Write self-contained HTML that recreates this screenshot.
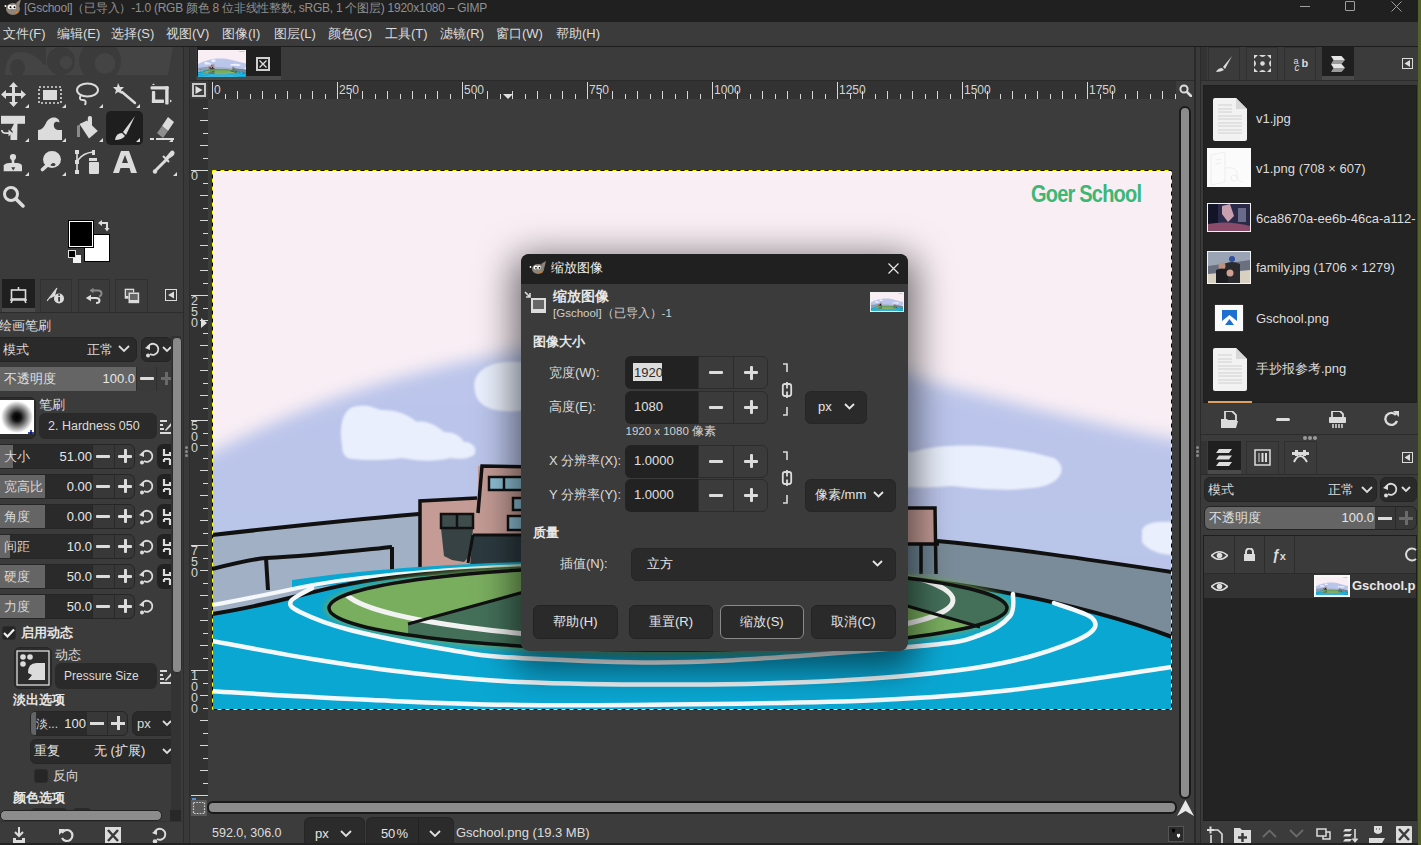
<!DOCTYPE html>
<html><head><meta charset="utf-8"><style>
html,body{margin:0;padding:0;width:1421px;height:845px;overflow:hidden;background:#3b3b3b;font-family:"Liberation Sans",sans-serif;}
body>div{position:absolute;}
.t{white-space:nowrap;}
</style></head><body>

<svg width="0" height="0" style="position:absolute">
<defs>
<filter id="blur8" x="-20%" y="-20%" width="140%" height="140%"><feGaussianBlur stdDeviation="8"/></filter>
<filter id="blur3" x="-20%" y="-20%" width="140%" height="140%"><feGaussianBlur stdDeviation="3"/></filter>
<filter id="blur1" x="-5%" y="-5%" width="110%" height="110%"><feGaussianBlur stdDeviation="0.8"/></filter>
<clipPath id="fieldclip"><ellipse cx="456" cy="438" rx="339" ry="42"/></clipPath>
<linearGradient id="skyg" x1="0" y1="0" x2="0" y2="1">
<stop offset="0" stop-color="#bcc6eb"/><stop offset="1" stop-color="#b8c3e8"/></linearGradient>
<symbol id="illus" viewBox="0 0 960 540" width="960" height="540">
<rect width="960" height="540" fill="#f8eef4"/>
<path d="M-30 298 C 60 250 150 207 330 176 C 450 160 600 165 720 212 C 820 238 900 258 990 275 L 990 560 L -30 560 Z" fill="url(#skyg)" filter="url(#blur8)"/>
<g fill="#e9effc" filter="url(#blur1)">
<path d="M130 275 C 126 250 134 236 146 236 C 156 234 162 238 170 240 C 185 240 195 244 205 252 C 215 250 225 256 232 262 C 244 262 250 268 252 272 C 262 272 266 280 262 285 C 255 290 245 289 238 288 C 225 292 205 291 190 288 C 170 291 150 290 140 289 C 132 288 130 282 130 275 Z"/>
<path d="M263 222 C 258 200 280 190 305 192 C 330 190 350 200 352 215 C 352 235 335 242 315 240 C 290 244 266 240 263 222 Z"/>
<path d="M640 300 C 650 285 680 278 700 282 C 740 270 800 276 842 288 C 858 298 848 316 820 318 C 790 322 760 318 740 316 C 700 320 650 316 640 300 Z"/>
<path d="M930 360 C 935 350 950 352 965 352 L 965 385 C 950 386 935 380 930 372 Z"/>
</g>
<!-- wall -->
<path d="M0 365 C 80 356 160 348 207 344 L 330 340 L 500 345 L 725 371 C 800 380 880 392 960 402 L 960 470 C 860 440 780 418 690 404 L 400 397 C 250 402 120 420 0 444 Z" fill="#a2b0c5"/>
<path d="M725 371 C 800 380 880 392 960 402 L 960 470 C 860 440 780 418 690 404 Z" fill="#7a8c99"/>
<path d="M0 365 C 80 356 160 348 207 344" stroke="#111" stroke-width="4" fill="none"/>
<path d="M725 371 C 800 378 880 390 960 402" stroke="#111" stroke-width="4" fill="none"/>
<!-- lower rail left -->
<path d="M0 399 C 20 394 40 389 54 388 C 100 386 150 380 180 377" stroke="#111" stroke-width="4" fill="none"/>
<path d="M54 388 L 56 420 M180 377 L 180 412" stroke="#111" stroke-width="4" fill="none"/>
<!-- buildings -->
<path d="M207 331 L 266 328 L 266 398 L 207 398 Z" fill="#c49b95"/>
<path d="M266 296 L 330 297 L 330 396 L 266 396 Z" fill="#c49b95"/>
<path d="M229 358 L 261 358 L 259 385 L 252 392 L 240 390 L 232 386 Z" fill="#364243"/>
<path d="M261 365 L 330 365 L 330 396 L 258 396 Z" fill="#2c3a40"/>
<path d="M208 400 L 208 331 L 265 328" stroke="#111" stroke-width="3.5" fill="none"/>
<path d="M266 343 L 270 296 L 330 297" stroke="#111" stroke-width="3.5" fill="none"/>
<rect x="277" y="307" width="40" height="13" fill="#8ec0d6" stroke="#111" stroke-width="2.5"/>
<path d="M292 307 L 292 320" stroke="#111" stroke-width="2.5"/>
<rect x="301" y="328" width="14" height="12" fill="#8ec0d6" stroke="#111" stroke-width="2.5"/>
<rect x="296" y="346" width="19" height="14" fill="#8ec0d6" stroke="#111" stroke-width="2.5"/>
<rect x="229" y="344" width="32" height="14" fill="#3e4c4c" stroke="#111" stroke-width="2.5"/>
<path d="M245 344 L 245 358" stroke="#111" stroke-width="2.5"/>
<path d="M261 365 L 330 365 M261 365 L 256 393" stroke="#111" stroke-width="3" fill="none"/>
<path d="M680 338 L 723 338 L 724 374 L 680 374 Z" fill="#c49b95"/>
<path d="M680 374 L 725 374 L 725 404 L 680 404 Z" fill="#6f8595"/>
<path d="M680 338 L 723 338 L 724 404 M680 374 L 727 374 M709 374 L 709 404" stroke="#111" stroke-width="3.5" fill="none"/>
<!-- track blue -->
<path d="M0 444 C 140 422 100 396 480 396 C 700 396 860 430 960 467 L 960 540 L 0 540 Z" fill="#0aa7d3"/>
<path d="M80 410 C 160 398 260 392 400 390 L 400 398 C 260 402 160 410 80 420 Z" fill="#0aa7d3"/>
<path d="M0 435 C 40 428 70 421 101 415 C 160 404 250 398 400 392" stroke="#f4f8fa" stroke-width="4" fill="none"/>
<path d="M0 444 C 140 422 100 396 480 396 C 700 396 860 430 960 467" stroke="#111" stroke-width="4" fill="none"/>
<!-- field -->
<ellipse cx="456" cy="438" rx="343" ry="46" fill="#6fa65a" filter="url(#blur3)"/>
<ellipse cx="456" cy="438" rx="339" ry="42" fill="#7aae5f"/>
<g clip-path="url(#fieldclip)">
<path d="M196 454 L 330 417 L 330 520 L 196 520 Z" fill="#44705a"/><path d="M650 423 L 768 457 L 800 457 L 800 380 L 650 380 Z" fill="#44705a"/>
<ellipse cx="436" cy="424" rx="305" ry="46" fill="none" stroke="#f2f2f2" stroke-width="5" transform="rotate(1.2 436 424)"/>
</g>
<ellipse cx="456" cy="438" rx="339" ry="42" fill="none" stroke="#111" stroke-width="3.5"/>
<path d="M196 454 L 330 417 M650 423 L 768 457" stroke="#111" stroke-width="3"/>
<!-- lane lines -->
<g stroke="#f4f8fa" fill="none" stroke-width="4.5" stroke-linecap="round">
<path d="M100 418 C 96.5 420.2 81.0 427.0 79 431 C 77.0 435.0 78.2 437.2 88 442 C 97.8 446.8 113.0 453.7 138 460 C 163.0 466.3 209.7 475.3 238 480 C 266.3 484.7 268.2 486.0 308 488 C 347.8 490.0 410.3 494.0 477 492 C 543.7 490.0 659.5 480.5 708 476 C 756.5 471.5 753.0 470.0 768 465 C 783.0 460.0 792.5 452.8 798 446 C 803.5 439.2 800.5 427.7 801 424"/>
<path d="M-5 470 C 12.5 473.2 65.8 483.5 100 489 C 134.2 494.5 165.3 499.2 200 503 C 234.7 506.8 261.8 510.1 308 512 C 354.2 513.9 423.7 514.8 477 514.5 C 530.3 514.2 582.8 512.9 628 510.5 C 673.2 508.1 716.0 504.1 748 500 C 780.0 495.9 798.8 491.8 820 486 C 841.2 480.2 865.0 471.3 875 465 C 885.0 458.7 885.5 453.3 880 448 C 874.5 442.7 848.3 435.5 842 433"/>
<path d="M-5 521 C 22.5 522.5 107.8 527.7 160 530 C 212.2 532.3 250.5 534.3 308 535 C 365.5 535.7 445.0 534.8 505 534 C 565.0 533.2 618.8 532.3 668 530 C 717.2 527.7 751.3 525.5 800 520 C 848.7 514.5 933.3 500.8 960 497"/>
</g>
<!-- logo -->
<text transform="translate(819,32) scale(1,1.17)" x="0" y="0" font-family="Liberation Sans" font-weight="bold" font-size="20" fill="#3cb774" textLength="111" lengthAdjust="spacing">Goer School</text>
</symbol>
</defs>
</svg>
<div style="left:0px;top:0px;width:1421px;height:845px;background:#3b3b3b"></div>
<div style="left:0px;top:0px;width:1421px;height:22px;background:#202020"></div>
<div style="left:0px;top:22px;width:1421px;height:24px;background:#3b3b3b"></div>
<div style="left:0px;top:46px;width:1421px;height:1px;background:#1c1c1c"></div>
<div style="left:1418px;top:0px;width:3px;height:845px;background:#55602a"></div>
<svg style="position:absolute;left:2px;top:-2px;" width="20" height="20" viewBox="0 0 20 20"><ellipse cx="11" cy="11" rx="7" ry="6" fill="#8f8478"/><path d="M14 5 L19 1 L17 9 Z" fill="#8f8478"/><circle cx="8" cy="9" r="2.2" fill="#fff"/><circle cx="12" cy="9" r="2.2" fill="#fff"/><circle cx="8.5" cy="9.3" r="1" fill="#000"/><circle cx="12.5" cy="9.3" r="1" fill="#000"/><circle cx="3.5" cy="8" r="1" fill="#fff"/><path d="M13 13 l4 2 -3 0z" fill="#d87a2a"/></svg>
<div class="t" style="left:24px;top:0.0px;height:16px;line-height:16px;font-size:12px;color:#909090;font-weight:normal;letter-spacing:-0.25px">[Gschool]（已导入）-1.0 (RGB 颜色 8 位非线性整数, sRGB, 1 个图层) 1920x1080 – GIMP</div>
<div style="left:1300px;top:6px;width:10px;height:1px;background:#a0a0a0"></div>
<div style="left:1345px;top:1px;width:10px;height:10px;border:1px solid #a0a0a0;border-radius:1px;box-sizing:border-box"></div>
<svg style="position:absolute;left:1391px;top:1px;" width="11" height="11" viewBox="0 0 11 11"><path d="M0.5 0.5 L10.5 10.5 M10.5 0.5 L0.5 10.5" stroke="#a0a0a0" stroke-width="1"/></svg>
<div class="t" style="left:3px;top:25.0px;height:18px;line-height:18px;font-size:13px;color:#dcdcdc;font-weight:normal;">文件(F)</div>
<div class="t" style="left:57px;top:25.0px;height:18px;line-height:18px;font-size:13px;color:#dcdcdc;font-weight:normal;">编辑(E)</div>
<div class="t" style="left:111px;top:25.0px;height:18px;line-height:18px;font-size:13px;color:#dcdcdc;font-weight:normal;">选择(S)</div>
<div class="t" style="left:166px;top:25.0px;height:18px;line-height:18px;font-size:13px;color:#dcdcdc;font-weight:normal;">视图(V)</div>
<div class="t" style="left:222px;top:25.0px;height:18px;line-height:18px;font-size:13px;color:#dcdcdc;font-weight:normal;">图像(I)</div>
<div class="t" style="left:274px;top:25.0px;height:18px;line-height:18px;font-size:13px;color:#dcdcdc;font-weight:normal;">图层(L)</div>
<div class="t" style="left:328px;top:25.0px;height:18px;line-height:18px;font-size:13px;color:#dcdcdc;font-weight:normal;">颜色(C)</div>
<div class="t" style="left:385px;top:25.0px;height:18px;line-height:18px;font-size:13px;color:#dcdcdc;font-weight:normal;">工具(T)</div>
<div class="t" style="left:440px;top:25.0px;height:18px;line-height:18px;font-size:13px;color:#dcdcdc;font-weight:normal;">滤镜(R)</div>
<div class="t" style="left:496px;top:25.0px;height:18px;line-height:18px;font-size:13px;color:#dcdcdc;font-weight:normal;">窗口(W)</div>
<div class="t" style="left:556px;top:25.0px;height:18px;line-height:18px;font-size:13px;color:#dcdcdc;font-weight:normal;">帮助(H)</div>
<div style="left:0px;top:47px;width:183px;height:798px;background:#3b3b3b"></div>
<div style="left:183px;top:47px;width:1px;height:798px;background:#2c2c2c"></div>
<div style="left:184px;top:47px;width:5px;height:798px;background:#393939"></div>
<div style="left:189px;top:47px;width:1px;height:798px;background:#2c2c2c"></div>
<svg style="position:absolute;left:0px;top:47px;" width="183" height="28" viewBox="0 0 183 28"><path d="M46 0 L173 0 L168 28 L46 28 Z" fill="#444"/><path d="M5 28 C5 12 12 5 20 5 C 30 5 38 10 44 18 L46 18 L46 28 Z" fill="#444"/><ellipse cx="17.5" cy="21" rx="7.5" ry="9" fill="#3b3b3b"/><circle cx="61" cy="14" r="14" fill="#3b3b3b"/><circle cx="66" cy="15.5" r="6.4" fill="#444"/><circle cx="100" cy="14" r="21" fill="#3b3b3b"/><circle cx="105" cy="16.4" r="10.4" fill="#444"/></svg>
<div style="left:106px;top:111px;width:37px;height:34px;background:#1e1e1e;border-radius:5px"></div>
<svg style="position:absolute;left:1px;top:82px;" width="25" height="25" viewBox="0 0 25 25"><g fill="#dcdcdc"><path d="M12.5 0 L17 5 L14 5 L14 11 L20 11 L20 8 L25 12.5 L20 17 L20 14 L14 14 L14 20 L17 20 L12.5 25 L8 20 L11 20 L11 14 L5 14 L5 17 L0 12.5 L5 8 L5 11 L11 11 L11 5 L8 5 Z"/></g></svg>
<svg style="position:absolute;left:25px;top:104px;" width="4" height="4" viewBox="0 0 4 4"><path d="M4 0 L4 4 L0 4 Z" fill="#dcdcdc"/></svg>
<svg style="position:absolute;left:38px;top:86px;" width="24" height="18" viewBox="0 0 24 18"><rect x="1" y="1" width="22" height="16" fill="none" stroke="#dcdcdc" stroke-width="1.6" stroke-dasharray="2 2"/><rect x="5" y="4" width="14" height="10" fill="#dcdcdc"/></svg>
<svg style="position:absolute;left:62px;top:104px;" width="4" height="4" viewBox="0 0 4 4"><path d="M4 0 L4 4 L0 4 Z" fill="#dcdcdc"/></svg>
<svg style="position:absolute;left:75px;top:82px;" width="24" height="24" viewBox="0 0 24 24"><ellipse cx="12.5" cy="8" rx="10.5" ry="6.5" fill="none" stroke="#dcdcdc" stroke-width="2"/><path d="M6 13 Q3 18 8 18 Q12 18 10 23" fill="none" stroke="#dcdcdc" stroke-width="2"/></svg>
<svg style="position:absolute;left:99px;top:104px;" width="4" height="4" viewBox="0 0 4 4"><path d="M4 0 L4 4 L0 4 Z" fill="#dcdcdc"/></svg>
<svg style="position:absolute;left:113px;top:83px;" width="24" height="22" viewBox="0 0 24 22"><path d="M3 0 L5 4 L9 4 L6 7 L7 11 L3 9 L0 11 L1 7 L-2 4 L2 4 Z" fill="#dcdcdc" transform="translate(2,0)"/><path d="M9 9 L22 20" stroke="#dcdcdc" stroke-width="2.5" stroke-linecap="round"/></svg>
<svg style="position:absolute;left:136px;top:104px;" width="4" height="4" viewBox="0 0 4 4"><path d="M4 0 L4 4 L0 4 Z" fill="#dcdcdc"/></svg>
<svg style="position:absolute;left:150px;top:82px;" width="24" height="24" viewBox="0 0 24 24"><g fill="#dcdcdc"><rect x="0.6" y="4.3" width="18" height="3.3" rx="1"/><rect x="15.2" y="4.3" width="3.4" height="18.2" rx="1"/><rect x="1.9" y="8.9" width="3.3" height="12.1" rx="0.8"/><rect x="1.9" y="17.6" width="12.1" height="3.4" rx="0.8"/><path d="M2 3 L3.5 1.5 L5 3 Z"/><path d="M20 17.5 L22 19 L20 20.5 Z"/></g></svg>
<svg style="position:absolute;left:0px;top:110px;" width="30" height="32" viewBox="0 0 30 32"><g fill="#dcdcdc"><rect x="1" y="5.8" width="24" height="8"/><path d="M17.6 7 L17.2 30 L10.5 30 L10.5 24.5 L13 22 L11 19.5 Z"/><path d="M8.5 19.5 L12.5 23 L8.5 26.5 Z"/></g><path d="M1.8 20 Q2 23.2 6 23.2 L10 23.2" stroke="#dcdcdc" stroke-width="1.7" fill="none"/></svg>
<svg style="position:absolute;left:25px;top:138px;" width="4" height="4" viewBox="0 0 4 4"><path d="M4 0 L4 4 L0 4 Z" fill="#dcdcdc"/></svg>
<svg style="position:absolute;left:38px;top:116px;" width="25" height="25" viewBox="0 0 25 25"><path d="M0 24 L0 14 C 4 14 6 11 8 7 C 10 3 13 1.5 16 1.5 C 19.5 1.5 21.5 4 21.5 6.5 C 19.5 5.3 16.8 5.5 16 7.8 C 15.2 10.5 17 14 20 14 L24 14 L24 24 Z" fill="#dcdcdc"/></svg>
<svg style="position:absolute;left:62px;top:138px;" width="4" height="4" viewBox="0 0 4 4"><path d="M4 0 L4 4 L0 4 Z" fill="#dcdcdc"/></svg>
<svg style="position:absolute;left:75px;top:115px;" width="25" height="25" viewBox="0 0 25 25"><path d="M4.5 9 L12 5.4 L22.8 16.1 L14 23.6 Z" fill="#dcdcdc"/><rect x="12.8" y="1" width="4.2" height="12.2" rx="2" fill="#dcdcdc"/><path d="M2 11 Q3 9.5 5 10 L5 22 L2 22 Z" fill="#8a8a8a"/></svg>
<svg style="position:absolute;left:99px;top:138px;" width="4" height="4" viewBox="0 0 4 4"><path d="M4 0 L4 4 L0 4 Z" fill="#dcdcdc"/></svg>
<svg style="position:absolute;left:113px;top:116px;" width="24" height="24" viewBox="0 0 24 24"><path d="M22 0 L10 16 L13 19 Z" fill="#dcdcdc"/><path d="M9 17 Q3 17 2 24 Q9 24 12 20 Z" fill="#dcdcdc"/></svg>
<svg style="position:absolute;left:136px;top:138px;" width="4" height="4" viewBox="0 0 4 4"><path d="M4 0 L4 4 L0 4 Z" fill="#dcdcdc"/></svg>
<svg style="position:absolute;left:150px;top:116px;" width="24" height="24" viewBox="0 0 24 24"><path d="M12 10 L18 1 L24 6 L18 15 Z" fill="#dcdcdc"/><path d="M7 17 L12 10 L18 15 L13 22 Z" fill="#8e8e8e"/><rect x="0" y="22" width="4" height="2" fill="#dcdcdc"/><rect x="6" y="22" width="18" height="2" fill="#dcdcdc"/></svg>
<svg style="position:absolute;left:169px;top:138px;" width="4" height="4" viewBox="0 0 4 4"><path d="M4 0 L4 4 L0 4 Z" fill="#dcdcdc"/></svg>
<svg style="position:absolute;left:3px;top:150px;" width="22" height="24" viewBox="0 0 22 24"><g fill="#dcdcdc"><circle cx="10" cy="7" r="3.1"/><rect x="8.7" y="9" width="2.6" height="5"/><path d="M0.7 21.3 L0.7 15.5 Q2 13 6 13 L14 13 Q18 13 19 15.5 L19 21.3 Z"/></g><path d="M8.2 17.2 L12.3 17.2 L10.25 20.5 Z" fill="#3b3b3b"/></svg>
<svg style="position:absolute;left:25px;top:172px;" width="4" height="4" viewBox="0 0 4 4"><path d="M4 0 L4 4 L0 4 Z" fill="#dcdcdc"/></svg>
<svg style="position:absolute;left:40px;top:150px;" width="24" height="24" viewBox="0 0 24 24"><ellipse cx="12" cy="9.5" rx="9" ry="8.5" fill="#dcdcdc"/><path d="M3 6 Q2 4 4 3" stroke="#3b3b3b" stroke-width="1" fill="none"/><ellipse cx="13" cy="14.5" rx="2.6" ry="1.6" fill="#3b3b3b"/><path d="M2.5 19.5 L13.5 9.7" stroke="#dcdcdc" stroke-width="3.6" stroke-linecap="round"/></svg>
<svg style="position:absolute;left:62px;top:172px;" width="4" height="4" viewBox="0 0 4 4"><path d="M4 0 L4 4 L0 4 Z" fill="#dcdcdc"/></svg>
<svg style="position:absolute;left:75px;top:150px;" width="24" height="24" viewBox="0 0 24 24"><g fill="#dcdcdc"><rect x="0" y="0" width="4" height="4"/><rect x="0" y="20" width="4" height="4"/><rect x="1.2" y="4" width="1.6" height="16"/><rect x="0" y="10" width="4" height="4"/><path d="M3 10 Q8 3 18 2" stroke="#dcdcdc" stroke-width="1.6" fill="none"/><rect x="17" y="0" width="3" height="5"/><rect x="14" y="8" width="8" height="3"/><rect x="14" y="12" width="10" height="12" rx="1"/></g></svg>
<svg style="position:absolute;left:113px;top:151px;" width="24" height="22" viewBox="0 0 24 22"><path d="M8 0 L16 0 L24 22 L18 22 L16.5 17 L7.5 17 L6 22 L0 22 Z M9 12 L15 12 L12 4 Z" fill="#dcdcdc" fill-rule="evenodd"/></svg>
<svg style="position:absolute;left:151px;top:150px;" width="24" height="24" viewBox="0 0 24 24"><path d="M14 8 L19 2 Q21.5 -0.5 23 1.5 Q24.5 3.5 22 6 L16 10 Z" fill="#dcdcdc"/><path d="M16 9 L5 20" stroke="#dcdcdc" stroke-width="3" stroke-linecap="round"/><circle cx="4" cy="21.5" r="2.2" fill="#dcdcdc"/><path d="M12 6 L18 12" stroke="#dcdcdc" stroke-width="2"/></svg>
<svg style="position:absolute;left:173px;top:172px;" width="4" height="4" viewBox="0 0 4 4"><path d="M4 0 L4 4 L0 4 Z" fill="#dcdcdc"/></svg>
<svg style="position:absolute;left:2px;top:185px;" width="23" height="23" viewBox="0 0 23 23"><circle cx="9" cy="9" r="6.5" fill="none" stroke="#dcdcdc" stroke-width="3"/><path d="M14 14 L21 21" stroke="#dcdcdc" stroke-width="3.5" stroke-linecap="round"/></svg>
<div style="left:84px;top:234px;width:26px;height:28px;background:#fff;border:1px solid #000;box-sizing:border-box"></div>
<div style="left:68px;top:220px;width:26px;height:28px;background:#000;border:1px solid #000;box-sizing:border-box"></div>
<div style="left:69px;top:221px;width:24px;height:26px;border:1px solid #fff;box-sizing:border-box"></div>
<svg style="position:absolute;left:98px;top:220px;" width="13" height="13" viewBox="0 0 13 13"><path d="M0 3 L4 0 L4 6 Z M6.5 8 L11.5 8 L9 11.5 Z" fill="#dcdcdc"/><path d="M3.5 3 L9 3 L9 8.5" stroke="#dcdcdc" stroke-width="2" fill="none"/></svg>
<div style="left:73px;top:255px;width:8px;height:8px;background:#f4f4f4"></div>
<div style="left:68px;top:250px;width:8px;height:8px;background:#000;border:1px solid #e0e0e0;box-sizing:border-box"></div>
<div style="left:0px;top:312px;width:183px;height:1px;background:#2c2c2c"></div>
<div style="left:2px;top:279px;width:33px;height:33px;background:#1f1f1f"></div>
<div style="left:2px;top:308px;width:33px;height:4px;background:#4a4a4a"></div>
<div style="left:40px;top:279px;width:32px;height:33px;background:#3a3a3a;border:1px solid #303030;border-bottom:none;box-sizing:border-box"></div>
<div style="left:78px;top:279px;width:32px;height:33px;background:#3a3a3a;border:1px solid #303030;border-bottom:none;box-sizing:border-box"></div>
<div style="left:115px;top:279px;width:33px;height:33px;background:#3a3a3a;border:1px solid #303030;border-bottom:none;box-sizing:border-box"></div>
<svg style="position:absolute;left:10px;top:287px;" width="17" height="17" viewBox="0 0 17 17"><rect x="1.5" y="3" width="14" height="9" fill="none" stroke="#dcdcdc" stroke-width="1.6"/><path d="M8.5 0 L8.5 3 M3 12 L1 16 M14 12 L16 16 M0 13 L17 13" stroke="#dcdcdc" stroke-width="1.6"/></svg>
<svg style="position:absolute;left:47px;top:287px;" width="18" height="17" viewBox="0 0 18 17"><path d="M0 14 L10 1" stroke="#dcdcdc" stroke-width="1.2"/><path d="M2 12 L10 1 L8 9 Z" fill="#dcdcdc"/><circle cx="12" cy="11.5" r="5" fill="#dcdcdc"/><rect x="11.2" y="10" width="1.8" height="4.5" fill="#3a3a3a"/><circle cx="12.1" cy="8" r="1" fill="#3a3a3a"/></svg>
<svg style="position:absolute;left:85px;top:287px;" width="18" height="18" viewBox="0 0 18 18"><path d="M4.5 3.5 L8.5 0.8 L8.5 6.2 Z" fill="#8a8a8a"/><path d="M8 3.5 L13 3.5 Q16.5 3.5 16.5 6.5 Q16.5 9 14 9.5" stroke="#8a8a8a" stroke-width="1.9" fill="none"/><path d="M0.8 11 L6 7.8 L6 14.2 Z" fill="#dcdcdc"/><path d="M5.5 11 L11 11 Q14.5 11 14.5 13.5 Q14.5 16 11 16" stroke="#dcdcdc" stroke-width="2" fill="none"/></svg>
<svg style="position:absolute;left:124px;top:287px;" width="17" height="17" viewBox="0 0 17 17"><rect x="0.7" y="1.7" width="9.5" height="10" fill="#dcdcdc"/><rect x="2" y="3" width="7" height="6" fill="#5a5a5a"/><rect x="4.5" y="5.5" width="10.7" height="10.7" fill="#3a3a3a"/><rect x="4.5" y="5.5" width="10.7" height="10.7" fill="#dcdcdc"/><rect x="6" y="7" width="7.7" height="6" fill="#666"/></svg>
<svg style="position:absolute;left:165px;top:289px;" width="12" height="12" viewBox="0 0 12 12"><rect x="0.5" y="0.5" width="11" height="11" fill="none" stroke="#dcdcdc" stroke-width="1"/><path d="M3 6 L9 2.5 L9 9.5 Z" fill="#dcdcdc"/></svg>
<div class="t" style="left:-1px;top:316.5px;height:18px;line-height:18px;font-size:13px;color:#dcdcdc;font-weight:normal;">绘画笔刷</div>
<div style="left:-6px;top:337px;width:143px;height:25px;background:#2a2a2a;border:1px solid #242424;border-radius:6px;box-sizing:border-box"></div>
<div class="t" style="left:3px;top:340.5px;height:18px;line-height:18px;font-size:13px;color:#dcdcdc;font-weight:normal;">模式</div>
<div class="t" style="left:87px;top:340.5px;height:18px;line-height:18px;font-size:13px;color:#dcdcdc;font-weight:normal;">正常</div>
<svg style="position:absolute;left:118px;top:345px;" width="12" height="8" viewBox="0 0 12 8"><path d="M1 1 L6 6 L11 1" stroke="#dcdcdc" stroke-width="1.8" fill="none"/></svg>
<div style="left:141px;top:337px;width:31px;height:25px;background:#2a2a2a;border:1px solid #242424;border-radius:6px;box-sizing:border-box"></div>
<svg style="position:absolute;left:144px;top:342px;" width="16" height="16" viewBox="0 0 16 16"><path d="M3.5 6 A5.5 5.5 0 1 1 6 12" stroke="#dcdcdc" stroke-width="1.8" fill="none"/><path d="M1 6 L6 2 L6 8 Z" fill="#dcdcdc"/><circle cx="4" cy="13.5" r="2" fill="#dcdcdc"/></svg>
<svg style="position:absolute;left:162px;top:346px;" width="10" height="7" viewBox="0 0 10 7"><path d="M1 1 L5 5 L9 1" stroke="#dcdcdc" stroke-width="1.8" fill="none"/></svg>
<div style="left:-6px;top:367px;width:178px;height:24px;background:#2a2a2a;border-radius:5px"></div>
<div style="left:0px;top:367px;width:136px;height:24px;background:#656565"></div>
<div class="t" style="left:4px;top:370.0px;height:18px;line-height:18px;font-size:13px;color:#e0e0e0;font-weight:normal;">不透明度</div>
<div class="t" style="right:1286px;top:370.0px;height:18px;line-height:18px;font-size:13px;color:#e6e6e6;font-weight:normal;text-align:right;">100.0</div>
<div style="left:136px;top:367px;width:1px;height:24px;background:#2f2f2f"></div>
<div style="left:137px;top:367px;width:20px;height:24px;background:#3a3a3a"></div>
<div style="left:156px;top:367px;width:1px;height:24px;background:#2f2f2f"></div>
<div style="left:157px;top:367px;width:15px;height:24px;background:#3a3a3a"></div>
<div style="left:140px;top:377px;width:14px;height:3px;background:#dcdcdc;border-radius:1px"></div>
<div style="left:161px;top:377px;width:11px;height:3px;background:#6a6a6a"></div>
<div style="left:165px;top:372px;width:3px;height:13px;background:#6a6a6a"></div>
<div style="left:-4px;top:397px;width:40px;height:42px;background:#2c2c2c;border:1px solid #262626;border-radius:6px;box-sizing:border-box"></div>
<svg style="position:absolute;left:0px;top:400px;" width="34" height="34" viewBox="0 0 34 34"><defs><radialGradient id="bg1"><stop offset="0" stop-color="#000"/><stop offset="0.25" stop-color="#111"/><stop offset="1" stop-color="#fff"/></radialGradient></defs><rect width="34" height="34" fill="#fff"/><circle cx="17" cy="17" r="16" fill="url(#bg1)"/><path d="M28 33 L34 33 M31 30 L31 36" stroke="#001080" stroke-width="1.5"/></svg>
<div class="t" style="left:39px;top:395.5px;height:18px;line-height:18px;font-size:13px;color:#dcdcdc;font-weight:normal;">笔刷</div>
<div style="left:39px;top:413px;width:118px;height:26px;background:#2a2a2a;border-radius:6px"></div>
<div class="t" style="left:48px;top:417.5px;height:17px;line-height:17px;font-size:12.5px;color:#dcdcdc;font-weight:normal;">2. Hardness 050</div>
<svg style="position:absolute;left:160px;top:420px;" width="12" height="14" viewBox="0 0 12 14"><path d="M0 1 L7 1 M0 5 L3 5 M0 9 L4 9 M0 13 L12 13" stroke="#dcdcdc" stroke-width="2"/><path d="M5 10 L11 3 L12 5 L6 11 Z" fill="#dcdcdc"/></svg>
<div style="left:-6px;top:444px;width:141px;height:25px;background:#2a2a2a;border:1px solid #262626;border-radius:6px;box-sizing:border-box"></div>
<div style="left:0px;top:445px;width:13px;height:23px;background:#656565"></div>
<div class="t" style="left:4px;top:447.5px;height:18px;line-height:18px;font-size:13px;color:#d8d8d8;font-weight:normal;">大小</div>
<div class="t" style="right:1329px;top:447.5px;height:18px;line-height:18px;font-size:13px;color:#e6e6e6;font-weight:normal;text-align:right;">51.00</div>
<div style="left:92px;top:445px;width:1px;height:23px;background:#272727"></div>
<div style="left:93px;top:445px;width:21px;height:23px;background:#383838"></div>
<div style="left:114px;top:445px;width:1px;height:23px;background:#2a2a2a"></div>
<div style="left:115px;top:445px;width:19px;height:23px;background:#383838;border-radius:0 5px 5px 0"></div>
<div style="left:96px;top:455px;width:14px;height:3px;background:#dcdcdc;border-radius:1px"></div>
<div style="left:118px;top:455px;width:14px;height:3px;background:#dcdcdc;border-radius:1px"></div>
<div style="left:123.5px;top:449px;width:3px;height:14px;background:#dcdcdc;border-radius:1px"></div>
<svg style="position:absolute;left:138px;top:449px;" width="16" height="16" viewBox="0 0 16 16"><path d="M3.5 6 A5.5 5.5 0 1 1 6 12" stroke="#dcdcdc" stroke-width="1.8" fill="none"/><path d="M1 6 L6 2 L6 8 Z" fill="#dcdcdc"/><circle cx="4" cy="13.5" r="2" fill="#dcdcdc"/></svg>
<div style="left:157px;top:444px;width:22px;height:25px;background:#222;border-radius:6px"></div>
<svg style="position:absolute;left:162px;top:449px;" width="10" height="16" viewBox="0 0 10 16"><path d="M2 0 L2 6 L8 6 L8 3 M8 10 L8 16 M2 10 L8 10 M2 10 L2 13" stroke="#dcdcdc" stroke-width="2.2" fill="none"/></svg>
<div style="left:-6px;top:474px;width:141px;height:25px;background:#2a2a2a;border:1px solid #262626;border-radius:6px;box-sizing:border-box"></div>
<div style="left:0px;top:475px;width:45px;height:23px;background:#656565"></div>
<div class="t" style="left:4px;top:477.5px;height:18px;line-height:18px;font-size:13px;color:#d8d8d8;font-weight:normal;">宽高比</div>
<div class="t" style="right:1329px;top:477.5px;height:18px;line-height:18px;font-size:13px;color:#e6e6e6;font-weight:normal;text-align:right;">0.00</div>
<div style="left:92px;top:475px;width:1px;height:23px;background:#272727"></div>
<div style="left:93px;top:475px;width:21px;height:23px;background:#383838"></div>
<div style="left:114px;top:475px;width:1px;height:23px;background:#2a2a2a"></div>
<div style="left:115px;top:475px;width:19px;height:23px;background:#383838;border-radius:0 5px 5px 0"></div>
<div style="left:96px;top:485px;width:14px;height:3px;background:#dcdcdc;border-radius:1px"></div>
<div style="left:118px;top:485px;width:14px;height:3px;background:#dcdcdc;border-radius:1px"></div>
<div style="left:123.5px;top:479px;width:3px;height:14px;background:#dcdcdc;border-radius:1px"></div>
<svg style="position:absolute;left:138px;top:479px;" width="16" height="16" viewBox="0 0 16 16"><path d="M3.5 6 A5.5 5.5 0 1 1 6 12" stroke="#dcdcdc" stroke-width="1.8" fill="none"/><path d="M1 6 L6 2 L6 8 Z" fill="#dcdcdc"/><circle cx="4" cy="13.5" r="2" fill="#dcdcdc"/></svg>
<div style="left:157px;top:474px;width:22px;height:25px;background:#222;border-radius:6px"></div>
<svg style="position:absolute;left:162px;top:479px;" width="10" height="16" viewBox="0 0 10 16"><path d="M2 0 L2 6 L8 6 L8 3 M8 10 L8 16 M2 10 L8 10 M2 10 L2 13" stroke="#dcdcdc" stroke-width="2.2" fill="none"/></svg>
<div style="left:-6px;top:504px;width:141px;height:25px;background:#2a2a2a;border:1px solid #262626;border-radius:6px;box-sizing:border-box"></div>
<div style="left:0px;top:505px;width:45px;height:23px;background:#656565"></div>
<div class="t" style="left:4px;top:507.5px;height:18px;line-height:18px;font-size:13px;color:#d8d8d8;font-weight:normal;">角度</div>
<div class="t" style="right:1329px;top:507.5px;height:18px;line-height:18px;font-size:13px;color:#e6e6e6;font-weight:normal;text-align:right;">0.00</div>
<div style="left:92px;top:505px;width:1px;height:23px;background:#272727"></div>
<div style="left:93px;top:505px;width:21px;height:23px;background:#383838"></div>
<div style="left:114px;top:505px;width:1px;height:23px;background:#2a2a2a"></div>
<div style="left:115px;top:505px;width:19px;height:23px;background:#383838;border-radius:0 5px 5px 0"></div>
<div style="left:96px;top:515px;width:14px;height:3px;background:#dcdcdc;border-radius:1px"></div>
<div style="left:118px;top:515px;width:14px;height:3px;background:#dcdcdc;border-radius:1px"></div>
<div style="left:123.5px;top:509px;width:3px;height:14px;background:#dcdcdc;border-radius:1px"></div>
<svg style="position:absolute;left:138px;top:509px;" width="16" height="16" viewBox="0 0 16 16"><path d="M3.5 6 A5.5 5.5 0 1 1 6 12" stroke="#dcdcdc" stroke-width="1.8" fill="none"/><path d="M1 6 L6 2 L6 8 Z" fill="#dcdcdc"/><circle cx="4" cy="13.5" r="2" fill="#dcdcdc"/></svg>
<div style="left:157px;top:504px;width:22px;height:25px;background:#222;border-radius:6px"></div>
<svg style="position:absolute;left:162px;top:509px;" width="10" height="16" viewBox="0 0 10 16"><path d="M2 0 L2 6 L8 6 L8 3 M8 10 L8 16 M2 10 L8 10 M2 10 L2 13" stroke="#dcdcdc" stroke-width="2.2" fill="none"/></svg>
<div style="left:-6px;top:534px;width:141px;height:25px;background:#2a2a2a;border:1px solid #262626;border-radius:6px;box-sizing:border-box"></div>
<div style="left:0px;top:535px;width:10px;height:23px;background:#656565"></div>
<div class="t" style="left:4px;top:537.5px;height:18px;line-height:18px;font-size:13px;color:#d8d8d8;font-weight:normal;">间距</div>
<div class="t" style="right:1329px;top:537.5px;height:18px;line-height:18px;font-size:13px;color:#e6e6e6;font-weight:normal;text-align:right;">10.0</div>
<div style="left:92px;top:535px;width:1px;height:23px;background:#272727"></div>
<div style="left:93px;top:535px;width:21px;height:23px;background:#383838"></div>
<div style="left:114px;top:535px;width:1px;height:23px;background:#2a2a2a"></div>
<div style="left:115px;top:535px;width:19px;height:23px;background:#383838;border-radius:0 5px 5px 0"></div>
<div style="left:96px;top:545px;width:14px;height:3px;background:#dcdcdc;border-radius:1px"></div>
<div style="left:118px;top:545px;width:14px;height:3px;background:#dcdcdc;border-radius:1px"></div>
<div style="left:123.5px;top:539px;width:3px;height:14px;background:#dcdcdc;border-radius:1px"></div>
<svg style="position:absolute;left:138px;top:539px;" width="16" height="16" viewBox="0 0 16 16"><path d="M3.5 6 A5.5 5.5 0 1 1 6 12" stroke="#dcdcdc" stroke-width="1.8" fill="none"/><path d="M1 6 L6 2 L6 8 Z" fill="#dcdcdc"/><circle cx="4" cy="13.5" r="2" fill="#dcdcdc"/></svg>
<div style="left:157px;top:534px;width:22px;height:25px;background:#222;border-radius:6px"></div>
<svg style="position:absolute;left:162px;top:539px;" width="10" height="16" viewBox="0 0 10 16"><path d="M2 0 L2 6 L8 6 L8 3 M8 10 L8 16 M2 10 L8 10 M2 10 L2 13" stroke="#dcdcdc" stroke-width="2.2" fill="none"/></svg>
<div style="left:-6px;top:564px;width:141px;height:25px;background:#2a2a2a;border:1px solid #262626;border-radius:6px;box-sizing:border-box"></div>
<div style="left:0px;top:565px;width:45px;height:23px;background:#656565"></div>
<div class="t" style="left:4px;top:567.5px;height:18px;line-height:18px;font-size:13px;color:#d8d8d8;font-weight:normal;">硬度</div>
<div class="t" style="right:1329px;top:567.5px;height:18px;line-height:18px;font-size:13px;color:#e6e6e6;font-weight:normal;text-align:right;">50.0</div>
<div style="left:92px;top:565px;width:1px;height:23px;background:#272727"></div>
<div style="left:93px;top:565px;width:21px;height:23px;background:#383838"></div>
<div style="left:114px;top:565px;width:1px;height:23px;background:#2a2a2a"></div>
<div style="left:115px;top:565px;width:19px;height:23px;background:#383838;border-radius:0 5px 5px 0"></div>
<div style="left:96px;top:575px;width:14px;height:3px;background:#dcdcdc;border-radius:1px"></div>
<div style="left:118px;top:575px;width:14px;height:3px;background:#dcdcdc;border-radius:1px"></div>
<div style="left:123.5px;top:569px;width:3px;height:14px;background:#dcdcdc;border-radius:1px"></div>
<svg style="position:absolute;left:138px;top:569px;" width="16" height="16" viewBox="0 0 16 16"><path d="M3.5 6 A5.5 5.5 0 1 1 6 12" stroke="#dcdcdc" stroke-width="1.8" fill="none"/><path d="M1 6 L6 2 L6 8 Z" fill="#dcdcdc"/><circle cx="4" cy="13.5" r="2" fill="#dcdcdc"/></svg>
<div style="left:157px;top:564px;width:22px;height:25px;background:#222;border-radius:6px"></div>
<svg style="position:absolute;left:162px;top:569px;" width="10" height="16" viewBox="0 0 10 16"><path d="M2 0 L2 6 L8 6 L8 3 M8 10 L8 16 M2 10 L8 10 M2 10 L2 13" stroke="#dcdcdc" stroke-width="2.2" fill="none"/></svg>
<div style="left:-6px;top:594px;width:141px;height:25px;background:#2a2a2a;border:1px solid #262626;border-radius:6px;box-sizing:border-box"></div>
<div style="left:0px;top:595px;width:45px;height:23px;background:#656565"></div>
<div class="t" style="left:4px;top:597.5px;height:18px;line-height:18px;font-size:13px;color:#d8d8d8;font-weight:normal;">力度</div>
<div class="t" style="right:1329px;top:597.5px;height:18px;line-height:18px;font-size:13px;color:#e6e6e6;font-weight:normal;text-align:right;">50.0</div>
<div style="left:92px;top:595px;width:1px;height:23px;background:#272727"></div>
<div style="left:93px;top:595px;width:21px;height:23px;background:#383838"></div>
<div style="left:114px;top:595px;width:1px;height:23px;background:#2a2a2a"></div>
<div style="left:115px;top:595px;width:19px;height:23px;background:#383838;border-radius:0 5px 5px 0"></div>
<div style="left:96px;top:605px;width:14px;height:3px;background:#dcdcdc;border-radius:1px"></div>
<div style="left:118px;top:605px;width:14px;height:3px;background:#dcdcdc;border-radius:1px"></div>
<div style="left:123.5px;top:599px;width:3px;height:14px;background:#dcdcdc;border-radius:1px"></div>
<svg style="position:absolute;left:138px;top:599px;" width="16" height="16" viewBox="0 0 16 16"><path d="M3.5 6 A5.5 5.5 0 1 1 6 12" stroke="#dcdcdc" stroke-width="1.8" fill="none"/><path d="M1 6 L6 2 L6 8 Z" fill="#dcdcdc"/><circle cx="4" cy="13.5" r="2" fill="#dcdcdc"/></svg>
<div style="left:2px;top:626px;width:14px;height:14px;background:#252525;border:1px solid #2c2c2c;border-radius:3px;box-sizing:border-box"></div>
<svg style="position:absolute;left:3px;top:628px;" width="12" height="10" viewBox="0 0 12 10"><path d="M1 5 L4.5 8.5 L11 1.5" stroke="#f0f0f0" stroke-width="2.2" fill="none"/></svg>
<div class="t" style="left:21px;top:624.0px;height:18px;line-height:18px;font-size:13px;color:#e6e6e6;font-weight:bold;">启用动态</div>
<div style="left:14px;top:647px;width:38px;height:42px;background:#2c2c2c;border:1px solid #262626;border-radius:6px;box-sizing:border-box"></div>
<svg style="position:absolute;left:16px;top:650px;" width="34" height="36" viewBox="0 0 34 36"><rect x="1" y="1" width="32" height="34" fill="none" stroke="#dcdcdc" stroke-width="1.3"/><circle cx="7" cy="7" r="2.8" fill="#dcdcdc"/><circle cx="14" cy="7" r="2.8" fill="#dcdcdc"/><circle cx="7" cy="14" r="2.8" fill="#dcdcdc"/><path d="M12 23 Q12 12 22 13 L29 13 L29 30 L12 30 L16 25 Z" fill="#dcdcdc"/></svg>
<div class="t" style="left:55px;top:646.0px;height:18px;line-height:18px;font-size:13px;color:#dcdcdc;font-weight:normal;">动态</div>
<div style="left:55px;top:663px;width:102px;height:26px;background:#2a2a2a;border-radius:6px"></div>
<div class="t" style="left:64px;top:668.0px;height:16px;line-height:16px;font-size:12px;color:#dcdcdc;font-weight:normal;">Pressure Size</div>
<svg style="position:absolute;left:160px;top:670px;" width="12" height="14" viewBox="0 0 12 14"><path d="M0 1 L7 1 M0 5 L3 5 M0 9 L4 9 M0 13 L12 13" stroke="#dcdcdc" stroke-width="2"/><path d="M5 10 L11 3 L12 5 L6 11 Z" fill="#dcdcdc"/></svg>
<div class="t" style="left:13px;top:691.0px;height:18px;line-height:18px;font-size:13px;color:#e6e6e6;font-weight:bold;">淡出选项</div>
<div style="left:30px;top:711px;width:98px;height:25px;background:#2a2a2a;border:1px solid #262626;border-radius:6px;box-sizing:border-box"></div>
<div style="left:31px;top:712px;width:5px;height:23px;background:#656565;border-radius:4px 0 0 4px"></div>
<div class="t" style="left:36px;top:715.5px;height:16px;line-height:16px;font-size:12px;color:#d8d8d8;font-weight:normal;">淡...</div>
<div class="t" style="right:1335px;top:714.5px;height:18px;line-height:18px;font-size:13px;color:#e6e6e6;font-weight:normal;text-align:right;">100</div>
<div style="left:87px;top:712px;width:20px;height:23px;background:#383838"></div>
<div style="left:108px;top:712px;width:19px;height:23px;background:#383838;border-radius:0 5px 5px 0"></div>
<div style="left:90px;top:722px;width:14px;height:3px;background:#dcdcdc"></div>
<div style="left:111px;top:722px;width:14px;height:3px;background:#dcdcdc"></div>
<div style="left:116.5px;top:716px;width:3px;height:14px;background:#dcdcdc"></div>
<div style="left:132px;top:711px;width:48px;height:25px;background:#2a2a2a;border:1px solid #262626;border-radius:6px;box-sizing:border-box"></div>
<div class="t" style="left:137px;top:714.5px;height:18px;line-height:18px;font-size:13px;color:#dcdcdc;font-weight:normal;">px</div>
<svg style="position:absolute;left:162px;top:720px;" width="10" height="7" viewBox="0 0 10 7"><path d="M1 1 L5 5 L9 1" stroke="#dcdcdc" stroke-width="1.8" fill="none"/></svg>
<div style="left:30px;top:739px;width:150px;height:25px;background:#2a2a2a;border:1px solid #262626;border-radius:6px;box-sizing:border-box"></div>
<div class="t" style="left:34px;top:742.0px;height:18px;line-height:18px;font-size:13px;color:#e6e6e6;font-weight:normal;">重复</div>
<div class="t" style="left:94px;top:742.0px;height:18px;line-height:18px;font-size:13px;color:#e6e6e6;font-weight:normal;">无 (扩展)</div>
<svg style="position:absolute;left:162px;top:748px;" width="10" height="7" viewBox="0 0 10 7"><path d="M1 1 L5 5 L9 1" stroke="#dcdcdc" stroke-width="1.8" fill="none"/></svg>
<div style="left:34px;top:769px;width:14px;height:14px;background:#262626;border:1px solid #2c2c2c;border-radius:3px;box-sizing:border-box"></div>
<div class="t" style="left:53px;top:767.0px;height:18px;line-height:18px;font-size:13px;color:#dcdcdc;font-weight:normal;">反向</div>
<div class="t" style="left:13px;top:788.5px;height:18px;line-height:18px;font-size:13px;color:#e6e6e6;font-weight:bold;">颜色选项</div>
<div style="left:30px;top:808px;width:38px;height:6px;background:#2a2a2a;border-radius:5px 5px 0 0"></div>
<div style="left:72px;top:808px;width:20px;height:6px;background:#2a2a2a;border-radius:5px 5px 0 0"></div>
<div style="left:171px;top:336px;width:10px;height:476px;background:#333333"></div>
<div style="left:172px;top:337px;width:8px;height:334px;background:#8a8a8a;border-radius:4px;border:1px solid #2a2a2a"></div>
<div style="left:0px;top:810px;width:162px;height:11px;background:#8c8c8c;border-radius:5px;border:1px solid #222;box-sizing:border-box"></div>
<div style="left:170px;top:810px;width:11px;height:11px;background:#282828"></div>
<div style="left:0px;top:821px;width:183px;height:1px;background:#333"></div>
<svg style="position:absolute;left:12px;top:827px;" width="14" height="17" viewBox="0 0 14 17"><path d="M7 0 L7 9 M3 5 L7 9 L11 5" stroke="#dcdcdc" stroke-width="2" fill="none"/><path d="M1 11 L1 16 L13 16 L13 11 L10 11 L10 13 L4 13 L4 11 Z" fill="#dcdcdc"/></svg>
<svg style="position:absolute;left:58px;top:827px;" width="16" height="16" viewBox="0 0 16 16"><path d="M4 6 A5.5 5.5 0 1 1 4 11" stroke="#dcdcdc" stroke-width="2.2" fill="none"/><path d="M1 2 L7 2 L1 8 Z" fill="#dcdcdc"/></svg>
<svg style="position:absolute;left:105px;top:827px;" width="16" height="17" viewBox="0 0 16 17"><rect x="0" y="0" width="16" height="17" fill="#dcdcdc"/><path d="M3 3 L13 14 M13 3 L3 14" stroke="#3b3b3b" stroke-width="2.5"/></svg>
<svg style="position:absolute;left:151px;top:827px;" width="16" height="17" viewBox="0 0 16 17"><path d="M3.5 6 A5.5 5.5 0 1 1 6 12" stroke="#dcdcdc" stroke-width="2" fill="none"/><path d="M1 6 L6 2 L6 8 Z" fill="#dcdcdc"/><circle cx="4" cy="14.5" r="2.3" fill="#dcdcdc"/></svg>
<div style="left:0px;top:843px;width:183px;height:2px;background:#262626"></div>
<div style="left:185px;top:446px;width:3px;height:3px;background:#8a8a8a;border-radius:50%"></div>
<div style="left:185px;top:450px;width:3px;height:3px;background:#8a8a8a;border-radius:50%"></div>
<div style="left:185px;top:454px;width:3px;height:3px;background:#8a8a8a;border-radius:50%"></div>
<div style="left:190px;top:47px;width:1004px;height:796px;background:#3c3c3c"></div>
<div style="left:190px;top:47px;width:1004px;height:33px;background:#3b3b3b"></div>
<div style="left:190px;top:47px;width:6px;height:33px;background:#333"></div>
<div style="left:197px;top:47px;width:84px;height:29px;background:#1f1f1f"></div>
<div style="left:197px;top:76px;width:84px;height:4px;background:#4a4a4a"></div>
<div style="left:190px;top:80px;width:1004px;height:1px;background:#2a2a2a"></div>
<svg style="position:absolute;left:198px;top:50px;" width="48" height="27" viewBox="0 0 48 27"><use href="#illus" transform="scale(0.05)"/></svg>
<div style="left:256px;top:57px;width:14px;height:14px;border:2px solid #cfcfcf;box-sizing:border-box;background:#1f1f1f"></div>
<svg style="position:absolute;left:259px;top:60px;" width="8" height="8" viewBox="0 0 8 8"><path d="M0.5 0.5 L7.5 7.5 M7.5 0.5 L0.5 7.5" stroke="#e0e0e0" stroke-width="1.3"/></svg>
<div style="left:190px;top:81px;width:1004px;height:18px;background:#323232"></div>
<div style="left:190px;top:81px;width:18px;height:716px;background:#323232"></div>
<div style="left:190px;top:81px;width:18px;height:18px;background:#3a3a3a"></div>
<div style="left:192px;top:83px;width:14px;height:14px;border:2px solid #c8c8c8;box-sizing:border-box"></div>
<svg style="position:absolute;left:195px;top:86px;" width="8" height="8" viewBox="0 0 8 8"><path d="M0.5 0 L7.5 4 L0.5 8 Z" fill="#e0e0e0"/></svg>
<div class="t" style="left:214px;top:81.5px;height:16px;line-height:16px;font-size:12px;color:#d4d4d4;font-weight:normal;">0</div>
<div class="t" style="left:339px;top:81.5px;height:16px;line-height:16px;font-size:12px;color:#d4d4d4;font-weight:normal;">250</div>
<div class="t" style="left:464px;top:81.5px;height:16px;line-height:16px;font-size:12px;color:#d4d4d4;font-weight:normal;">500</div>
<div class="t" style="left:589px;top:81.5px;height:16px;line-height:16px;font-size:12px;color:#d4d4d4;font-weight:normal;">750</div>
<div class="t" style="left:714px;top:81.5px;height:16px;line-height:16px;font-size:12px;color:#d4d4d4;font-weight:normal;">1000</div>
<div class="t" style="left:839px;top:81.5px;height:16px;line-height:16px;font-size:12px;color:#d4d4d4;font-weight:normal;">1250</div>
<div class="t" style="left:964px;top:81.5px;height:16px;line-height:16px;font-size:12px;color:#d4d4d4;font-weight:normal;">1500</div>
<div class="t" style="left:1089px;top:81.5px;height:16px;line-height:16px;font-size:12px;color:#d4d4d4;font-weight:normal;">1750</div>
<div class="t" style="left:188.5px;top:167.9px;width:12px;height:17px;line-height:17px;font-size:12.5px;color:#d4d4d4;font-weight:normal;text-align:center;">0</div>
<div class="t" style="left:188.5px;top:292.9px;width:12px;height:17px;line-height:17px;font-size:12.5px;color:#d4d4d4;font-weight:normal;text-align:center;">2</div>
<div class="t" style="left:188.5px;top:304.0px;width:12px;height:17px;line-height:17px;font-size:12.5px;color:#d4d4d4;font-weight:normal;text-align:center;">5</div>
<div class="t" style="left:188.5px;top:315.1px;width:12px;height:17px;line-height:17px;font-size:12.5px;color:#d4d4d4;font-weight:normal;text-align:center;">0</div>
<div class="t" style="left:188.5px;top:417.9px;width:12px;height:17px;line-height:17px;font-size:12.5px;color:#d4d4d4;font-weight:normal;text-align:center;">5</div>
<div class="t" style="left:188.5px;top:429.0px;width:12px;height:17px;line-height:17px;font-size:12.5px;color:#d4d4d4;font-weight:normal;text-align:center;">0</div>
<div class="t" style="left:188.5px;top:440.1px;width:12px;height:17px;line-height:17px;font-size:12.5px;color:#d4d4d4;font-weight:normal;text-align:center;">0</div>
<div class="t" style="left:188.5px;top:542.9px;width:12px;height:17px;line-height:17px;font-size:12.5px;color:#d4d4d4;font-weight:normal;text-align:center;">7</div>
<div class="t" style="left:188.5px;top:554.0px;width:12px;height:17px;line-height:17px;font-size:12.5px;color:#d4d4d4;font-weight:normal;text-align:center;">5</div>
<div class="t" style="left:188.5px;top:565.1px;width:12px;height:17px;line-height:17px;font-size:12.5px;color:#d4d4d4;font-weight:normal;text-align:center;">0</div>
<div class="t" style="left:188.5px;top:667.9px;width:12px;height:17px;line-height:17px;font-size:12.5px;color:#d4d4d4;font-weight:normal;text-align:center;">1</div>
<div class="t" style="left:188.5px;top:679.0px;width:12px;height:17px;line-height:17px;font-size:12.5px;color:#d4d4d4;font-weight:normal;text-align:center;">0</div>
<div class="t" style="left:188.5px;top:690.1px;width:12px;height:17px;line-height:17px;font-size:12.5px;color:#d4d4d4;font-weight:normal;text-align:center;">0</div>
<div class="t" style="left:188.5px;top:701.2px;width:12px;height:17px;line-height:17px;font-size:12.5px;color:#d4d4d4;font-weight:normal;text-align:center;">0</div>
<svg style="position:absolute;left:0px;top:0px;" width="1421" height="845" viewBox="0 0 1421 845"><g fill="#d8d8d8"><rect x="212" y="82" width="1" height="17"/><rect x="225" y="94" width="1" height="5"/><rect x="237" y="91" width="1" height="8"/><rect x="250" y="94" width="1" height="5"/><rect x="262" y="91" width="1" height="8"/><rect x="275" y="94" width="1" height="5"/><rect x="287" y="91" width="1" height="8"/><rect x="300" y="94" width="1" height="5"/><rect x="312" y="91" width="1" height="8"/><rect x="325" y="94" width="1" height="5"/><rect x="337" y="82" width="1" height="17"/><rect x="350" y="94" width="1" height="5"/><rect x="362" y="91" width="1" height="8"/><rect x="375" y="94" width="1" height="5"/><rect x="387" y="91" width="1" height="8"/><rect x="400" y="94" width="1" height="5"/><rect x="412" y="91" width="1" height="8"/><rect x="425" y="94" width="1" height="5"/><rect x="437" y="91" width="1" height="8"/><rect x="450" y="94" width="1" height="5"/><rect x="462" y="82" width="1" height="17"/><rect x="475" y="94" width="1" height="5"/><rect x="487" y="91" width="1" height="8"/><rect x="500" y="94" width="1" height="5"/><rect x="512" y="91" width="1" height="8"/><rect x="525" y="94" width="1" height="5"/><rect x="537" y="91" width="1" height="8"/><rect x="550" y="94" width="1" height="5"/><rect x="562" y="91" width="1" height="8"/><rect x="575" y="94" width="1" height="5"/><rect x="587" y="82" width="1" height="17"/><rect x="600" y="94" width="1" height="5"/><rect x="612" y="91" width="1" height="8"/><rect x="625" y="94" width="1" height="5"/><rect x="637" y="91" width="1" height="8"/><rect x="650" y="94" width="1" height="5"/><rect x="662" y="91" width="1" height="8"/><rect x="675" y="94" width="1" height="5"/><rect x="687" y="91" width="1" height="8"/><rect x="700" y="94" width="1" height="5"/><rect x="712" y="82" width="1" height="17"/><rect x="725" y="94" width="1" height="5"/><rect x="737" y="91" width="1" height="8"/><rect x="750" y="94" width="1" height="5"/><rect x="762" y="91" width="1" height="8"/><rect x="775" y="94" width="1" height="5"/><rect x="787" y="91" width="1" height="8"/><rect x="800" y="94" width="1" height="5"/><rect x="812" y="91" width="1" height="8"/><rect x="825" y="94" width="1" height="5"/><rect x="837" y="82" width="1" height="17"/><rect x="850" y="94" width="1" height="5"/><rect x="862" y="91" width="1" height="8"/><rect x="875" y="94" width="1" height="5"/><rect x="887" y="91" width="1" height="8"/><rect x="900" y="94" width="1" height="5"/><rect x="912" y="91" width="1" height="8"/><rect x="925" y="94" width="1" height="5"/><rect x="937" y="91" width="1" height="8"/><rect x="950" y="94" width="1" height="5"/><rect x="962" y="82" width="1" height="17"/><rect x="975" y="94" width="1" height="5"/><rect x="987" y="91" width="1" height="8"/><rect x="1000" y="94" width="1" height="5"/><rect x="1012" y="91" width="1" height="8"/><rect x="1025" y="94" width="1" height="5"/><rect x="1037" y="91" width="1" height="8"/><rect x="1050" y="94" width="1" height="5"/><rect x="1062" y="91" width="1" height="8"/><rect x="1075" y="94" width="1" height="5"/><rect x="1087" y="82" width="1" height="17"/><rect x="1100" y="94" width="1" height="5"/><rect x="1112" y="91" width="1" height="8"/><rect x="1125" y="94" width="1" height="5"/><rect x="1137" y="91" width="1" height="8"/><rect x="1150" y="94" width="1" height="5"/><rect x="1162" y="91" width="1" height="8"/><rect x="1175" y="94" width="1" height="5"/><rect x="203" y="108" width="5" height="1"/><rect x="200" y="120" width="8" height="1"/><rect x="203" y="133" width="5" height="1"/><rect x="200" y="145" width="8" height="1"/><rect x="203" y="158" width="5" height="1"/><rect x="191" y="170" width="17" height="1"/><rect x="203" y="183" width="5" height="1"/><rect x="200" y="195" width="8" height="1"/><rect x="203" y="208" width="5" height="1"/><rect x="200" y="220" width="8" height="1"/><rect x="203" y="233" width="5" height="1"/><rect x="200" y="245" width="8" height="1"/><rect x="203" y="258" width="5" height="1"/><rect x="200" y="270" width="8" height="1"/><rect x="203" y="283" width="5" height="1"/><rect x="191" y="295" width="17" height="1"/><rect x="203" y="308" width="5" height="1"/><rect x="200" y="320" width="8" height="1"/><rect x="203" y="333" width="5" height="1"/><rect x="200" y="345" width="8" height="1"/><rect x="203" y="358" width="5" height="1"/><rect x="200" y="370" width="8" height="1"/><rect x="203" y="383" width="5" height="1"/><rect x="200" y="395" width="8" height="1"/><rect x="203" y="408" width="5" height="1"/><rect x="191" y="420" width="17" height="1"/><rect x="203" y="433" width="5" height="1"/><rect x="200" y="445" width="8" height="1"/><rect x="203" y="458" width="5" height="1"/><rect x="200" y="470" width="8" height="1"/><rect x="203" y="483" width="5" height="1"/><rect x="200" y="495" width="8" height="1"/><rect x="203" y="508" width="5" height="1"/><rect x="200" y="520" width="8" height="1"/><rect x="203" y="533" width="5" height="1"/><rect x="191" y="545" width="17" height="1"/><rect x="203" y="558" width="5" height="1"/><rect x="200" y="570" width="8" height="1"/><rect x="203" y="583" width="5" height="1"/><rect x="200" y="595" width="8" height="1"/><rect x="203" y="608" width="5" height="1"/><rect x="200" y="620" width="8" height="1"/><rect x="203" y="633" width="5" height="1"/><rect x="200" y="645" width="8" height="1"/><rect x="203" y="658" width="5" height="1"/><rect x="191" y="670" width="17" height="1"/><rect x="203" y="683" width="5" height="1"/><rect x="200" y="695" width="8" height="1"/><rect x="203" y="708" width="5" height="1"/><rect x="200" y="720" width="8" height="1"/><rect x="203" y="733" width="5" height="1"/><rect x="200" y="745" width="8" height="1"/><rect x="203" y="758" width="5" height="1"/><rect x="200" y="770" width="8" height="1"/><rect x="203" y="783" width="5" height="1"/><rect x="191" y="795" width="17" height="1"/></g></svg>
<div style="left:1176px;top:81px;width:18px;height:18px;background:#3c3c3c"></div>
<svg style="position:absolute;left:1179px;top:84px;" width="13" height="13" viewBox="0 0 13 13"><circle cx="5" cy="5" r="3.6" fill="none" stroke="#dcdcdc" stroke-width="2"/><path d="M8 8 L12 12" stroke="#dcdcdc" stroke-width="2.5" stroke-linecap="round"/></svg>
<svg style="position:absolute;left:503px;top:94px;" width="10" height="5" viewBox="0 0 10 5"><path d="M0 0 L10 0 L5 5 Z" fill="#e0e0e0"/></svg>
<svg style="position:absolute;left:201px;top:318px;" width="6" height="10" viewBox="0 0 6 10"><path d="M0 0 L6 5 L0 10 Z" fill="#e0e0e0"/></svg>
<svg style="position:absolute;left:212px;top:170px;" width="960" height="540" viewBox="0 0 960 540"><use href="#illus"/></svg>
<svg style="position:absolute;left:212px;top:170px" width="960" height="540"><rect x="0.5" y="0.5" width="959" height="539" fill="none" stroke="#000" stroke-width="1"/><rect x="0.5" y="0.5" width="959" height="539" fill="none" stroke="#ffff00" stroke-width="1" stroke-dasharray="4 4"/></svg>
<div style="left:1179px;top:99px;width:13px;height:698px;background:#3c3c3c"></div>
<div style="left:1179px;top:106px;width:12px;height:693px;background:#8c8c8c;border:2px solid #1a1a1a;border-radius:6px;box-sizing:border-box"></div>
<div style="left:207px;top:801px;width:970px;height:13px;background:#8c8c8c;border:2px solid #1a1a1a;border-radius:6px;box-sizing:border-box"></div>
<div style="left:191px;top:800px;width:16px;height:16px;background:#5a5a5a"></div>
<svg style="position:absolute;left:191px;top:800px;" width="16" height="16" viewBox="0 0 16 16"><rect x="2.5" y="2.5" width="11" height="11" fill="none" stroke="#d0d0d0" stroke-width="1.2" stroke-dasharray="1.6 1.2"/></svg>
<div style="left:192px;top:798px;width:4px;height:2px;background:#5090d0"></div>
<svg style="position:absolute;left:1177px;top:800px;" width="17" height="16" viewBox="0 0 17 16"><path d="M8.5 0 L17 16 L8.5 11 L0 16 Z" fill="#e8e8e8"/></svg>
<div class="t" style="left:212px;top:824.5px;height:17px;line-height:17px;font-size:12.5px;color:#dcdcdc;font-weight:normal;">592.0, 306.0</div>
<div style="left:304px;top:817px;width:61px;height:28px;background:#2b2b2b;border:1px solid #262626;border-bottom:none;border-radius:6px 6px 0 0;box-sizing:border-box"></div>
<div class="t" style="left:315px;top:825.0px;height:18px;line-height:18px;font-size:13px;color:#e6e6e6;font-weight:normal;">px</div>
<svg style="position:absolute;left:340px;top:830px;" width="12" height="8" viewBox="0 0 12 8"><path d="M1 1 L6 6 L11 1" stroke="#e0e0e0" stroke-width="1.8" fill="none"/></svg>
<div style="left:366px;top:817px;width:88px;height:28px;background:#2b2b2b;border:1px solid #262626;border-bottom:none;border-radius:6px 6px 0 0;box-sizing:border-box"></div>
<div style="left:418px;top:818px;width:1px;height:27px;background:#222"></div>
<div class="t" style="right:1013px;top:825.0px;height:18px;line-height:18px;font-size:13px;color:#e6e6e6;font-weight:normal;text-align:right;">50&#8202;%</div>
<svg style="position:absolute;left:429px;top:830px;" width="12" height="8" viewBox="0 0 12 8"><path d="M1 1 L6 6 L11 1" stroke="#e0e0e0" stroke-width="1.8" fill="none"/></svg>
<div class="t" style="left:456px;top:824.0px;height:18px;line-height:18px;font-size:13px;color:#dcdcdc;font-weight:normal;">Gschool.png (19.3 MB)</div>
<div style="left:1168px;top:826px;width:16px;height:16px;background:#2a2a2a;border:1px solid #555;box-sizing:border-box"></div>
<svg style="position:absolute;left:1170px;top:828px;" width="12" height="12" viewBox="0 0 12 12"><path d="M2 1 Q3.5 0 3.5 2 Q3.5 0 5 1 Q6 3 3.5 5 Q1 3 2 1Z" fill="#000"/><path d="M7 6 Q8.5 5 8.5 7 Q8.5 5 10 6 Q11 8 8.5 10 Q6 8 7 6Z" fill="#fff"/></svg>
<div style="left:190px;top:843px;width:1004px;height:2px;background:#262626"></div>
<div style="left:1194px;top:47px;width:2px;height:798px;background:#2a2a2a"></div>
<div style="left:1196px;top:47px;width:5px;height:798px;background:#3a3a3a"></div>
<div style="left:1200px;top:47px;width:1px;height:798px;background:#2a2a2a"></div>
<div style="left:1196px;top:446px;width:3px;height:3px;background:#8a8a8a;border-radius:50%"></div>
<div style="left:1196px;top:450px;width:3px;height:3px;background:#8a8a8a;border-radius:50%"></div>
<div style="left:1196px;top:454px;width:3px;height:3px;background:#8a8a8a;border-radius:50%"></div>
<div style="left:521px;top:254px;width:387px;height:397px;border-radius:8px;box-shadow:0 10px 36px 8px rgba(0,0,0,0.55)"></div>
<div style="left:521px;top:254px;width:387px;height:397px;background:#3b3b3b;border-radius:8px;overflow:hidden"></div>
<div style="left:521px;top:254px;width:387px;height:30px;background:#202020;border-radius:8px 8px 0 0"></div>
<svg style="position:absolute;left:529px;top:261px;" width="17" height="14" viewBox="0 0 17 14"><ellipse cx="9" cy="8" rx="6" ry="5" fill="#8f8478"/><path d="M12 3 L17 0 L15 8 Z" fill="#8f8478"/><circle cx="6.5" cy="6.5" r="1.9" fill="#fff"/><circle cx="10" cy="6.5" r="1.9" fill="#fff"/><circle cx="7" cy="6.8" r="0.9" fill="#000"/><circle cx="10.5" cy="6.8" r="0.9" fill="#000"/><circle cx="1.5" cy="6" r="0.9" fill="#fff"/><path d="M10 10 l4 2 -3 0z" fill="#d87a2a"/></svg>
<div class="t" style="left:551px;top:259.0px;height:18px;line-height:18px;font-size:13px;color:#f0f0f0;font-weight:normal;">缩放图像</div>
<svg style="position:absolute;left:888px;top:263px;" width="11" height="11" viewBox="0 0 11 11"><path d="M0.5 0.5 L10.5 10.5 M10.5 0.5 L0.5 10.5" stroke="#e8e8e8" stroke-width="1.2"/></svg>
<svg style="position:absolute;left:524px;top:291px;" width="23" height="23" viewBox="0 0 23 23"><path d="M1 1 L6 6 M6 2 L6 6 L2 6" stroke="#dcdcdc" stroke-width="1.6" fill="none"/><rect x="7" y="7" width="15" height="15" fill="#dcdcdc"/><rect x="9" y="9" width="11" height="9" fill="#666"/></svg>
<div class="t" style="left:553px;top:286.5px;height:19px;line-height:19px;font-size:14px;color:#e6e6e6;font-weight:bold;">缩放图像</div>
<div class="t" style="left:553px;top:304.5px;height:16px;line-height:16px;font-size:11.5px;color:#cfcfcf;font-weight:normal;">[Gschool]（已导入）-1</div>
<div style="left:870px;top:292px;width:34px;height:20px;background:#f0f0f0"></div>
<svg style="position:absolute;left:871px;top:293px;" width="32" height="18" viewBox="0 0 32 18"><use href="#illus" transform="scale(0.0333333,0.0333333)"/></svg>
<div class="t" style="left:533px;top:333.0px;height:18px;line-height:18px;font-size:13px;color:#e6e6e6;font-weight:bold;">图像大小</div>
<div class="t" style="left:549px;top:363.5px;height:18px;line-height:18px;font-size:13px;color:#dcdcdc;font-weight:normal;">宽度(W):</div>
<div style="left:625px;top:356px;width:74px;height:33px;background:#222;border-radius:6px 0 0 6px"></div>
<div style="left:633px;top:363px;width:29px;height:18px;background:#dcdcdc"></div>
<div class="t" style="left:634px;top:363.5px;height:18px;line-height:18px;font-size:13px;color:#2a2a2a;font-weight:normal;">1920</div>
<div style="left:698px;top:356px;width:70px;height:33px;background:#3b3b3b;border:1px solid #2c2c2c;border-radius:0 6px 6px 0;box-sizing:border-box"></div>
<div style="left:733px;top:356px;width:1px;height:33px;background:#2c2c2c"></div>
<div style="left:709px;top:371px;width:14px;height:3px;background:#dcdcdc;border-radius:1px"></div>
<div style="left:744px;top:371px;width:14px;height:3px;background:#dcdcdc;border-radius:1px"></div>
<div style="left:749.5px;top:365.5px;width:3px;height:14px;background:#dcdcdc;border-radius:1px"></div>
<div class="t" style="left:549px;top:398.0px;height:18px;line-height:18px;font-size:13px;color:#dcdcdc;font-weight:normal;">高度(E):</div>
<div style="left:625px;top:390.5px;width:74px;height:33px;background:#222;border-radius:6px 0 0 6px"></div>
<div class="t" style="left:634px;top:398.0px;height:18px;line-height:18px;font-size:13px;color:#e0e0e0;font-weight:normal;">1080</div>
<div style="left:698px;top:390.5px;width:70px;height:33px;background:#3b3b3b;border:1px solid #2c2c2c;border-radius:0 6px 6px 0;box-sizing:border-box"></div>
<div style="left:733px;top:390.5px;width:1px;height:33px;background:#2c2c2c"></div>
<div style="left:709px;top:405.5px;width:14px;height:3px;background:#dcdcdc;border-radius:1px"></div>
<div style="left:744px;top:405.5px;width:14px;height:3px;background:#dcdcdc;border-radius:1px"></div>
<div style="left:749.5px;top:400.0px;width:3px;height:14px;background:#dcdcdc;border-radius:1px"></div>
<div class="t" style="left:625.5px;top:423.0px;height:16px;line-height:16px;font-size:11.5px;color:#d0d0d0;font-weight:normal;">1920 x 1080 像素</div>
<svg style="position:absolute;left:781px;top:363px;" width="12" height="54" viewBox="0 0 12 54"><path d="M2 1 L6 1 L6 9" stroke="#dcdcdc" stroke-width="1.6" fill="none"/><rect x="1.8" y="21" width="8.4" height="12" rx="2.2" fill="none" stroke="#dcdcdc" stroke-width="1.8"/><path d="M6 19 L6 25.5 M6 28.5 L6 35" stroke="#dcdcdc" stroke-width="1.8"/><path d="M6 44 L6 52 L2 52" stroke="#dcdcdc" stroke-width="1.6" fill="none"/></svg>
<div style="left:805px;top:390.5px;width:62px;height:33px;background:#2a2a2a;border:1px solid #262626;border-radius:6px;box-sizing:border-box"></div>
<div class="t" style="left:818px;top:398.0px;height:18px;line-height:18px;font-size:13px;color:#e6e6e6;font-weight:normal;">px</div>
<svg style="position:absolute;left:844px;top:403px;" width="11" height="7" viewBox="0 0 11 7"><path d="M1 1 L5.5 5.5 L10 1" stroke="#e6e6e6" stroke-width="1.8" fill="none"/></svg>
<div class="t" style="left:549px;top:452.0px;height:18px;line-height:18px;font-size:13px;color:#dcdcdc;font-weight:normal;">X 分辨率(X):</div>
<div style="left:625px;top:444.5px;width:74px;height:33px;background:#222;border-radius:6px 0 0 6px"></div>
<div class="t" style="left:634px;top:452.0px;height:18px;line-height:18px;font-size:13px;color:#e0e0e0;font-weight:normal;">1.0000</div>
<div style="left:698px;top:444.5px;width:70px;height:33px;background:#3b3b3b;border:1px solid #2c2c2c;border-radius:0 6px 6px 0;box-sizing:border-box"></div>
<div style="left:733px;top:444.5px;width:1px;height:33px;background:#2c2c2c"></div>
<div style="left:709px;top:459.5px;width:14px;height:3px;background:#dcdcdc;border-radius:1px"></div>
<div style="left:744px;top:459.5px;width:14px;height:3px;background:#dcdcdc;border-radius:1px"></div>
<div style="left:749.5px;top:454.0px;width:3px;height:14px;background:#dcdcdc;border-radius:1px"></div>
<div class="t" style="left:549px;top:486.0px;height:18px;line-height:18px;font-size:13px;color:#dcdcdc;font-weight:normal;">Y 分辨率(Y):</div>
<div style="left:625px;top:478.5px;width:74px;height:33px;background:#222;border-radius:6px 0 0 6px"></div>
<div class="t" style="left:634px;top:486.0px;height:18px;line-height:18px;font-size:13px;color:#e0e0e0;font-weight:normal;">1.0000</div>
<div style="left:698px;top:478.5px;width:70px;height:33px;background:#3b3b3b;border:1px solid #2c2c2c;border-radius:0 6px 6px 0;box-sizing:border-box"></div>
<div style="left:733px;top:478.5px;width:1px;height:33px;background:#2c2c2c"></div>
<div style="left:709px;top:493.5px;width:14px;height:3px;background:#dcdcdc;border-radius:1px"></div>
<div style="left:744px;top:493.5px;width:14px;height:3px;background:#dcdcdc;border-radius:1px"></div>
<div style="left:749.5px;top:488.0px;width:3px;height:14px;background:#dcdcdc;border-radius:1px"></div>
<svg style="position:absolute;left:781px;top:451px;" width="12" height="54" viewBox="0 0 12 54"><path d="M2 1 L6 1 L6 9" stroke="#dcdcdc" stroke-width="1.6" fill="none"/><rect x="1.8" y="21" width="8.4" height="12" rx="2.2" fill="none" stroke="#dcdcdc" stroke-width="1.8"/><path d="M6 19 L6 25.5 M6 28.5 L6 35" stroke="#dcdcdc" stroke-width="1.8"/><path d="M6 44 L6 52 L2 52" stroke="#dcdcdc" stroke-width="1.6" fill="none"/></svg>
<div style="left:805px;top:478.5px;width:91px;height:33px;background:#2a2a2a;border:1px solid #262626;border-radius:6px;box-sizing:border-box"></div>
<div class="t" style="left:815px;top:486.0px;height:18px;line-height:18px;font-size:13px;color:#e6e6e6;font-weight:normal;">像素/mm</div>
<svg style="position:absolute;left:873px;top:491px;" width="11" height="7" viewBox="0 0 11 7"><path d="M1 1 L5.5 5.5 L10 1" stroke="#e6e6e6" stroke-width="1.8" fill="none"/></svg>
<div class="t" style="left:533px;top:523.5px;height:18px;line-height:18px;font-size:13px;color:#e6e6e6;font-weight:bold;">质量</div>
<div class="t" style="left:560px;top:554.5px;height:18px;line-height:18px;font-size:13px;color:#dcdcdc;font-weight:normal;">插值(N):</div>
<div style="left:631px;top:547.5px;width:265px;height:33px;background:#2a2a2a;border:1px solid #262626;border-radius:6px;box-sizing:border-box"></div>
<div class="t" style="left:647px;top:555.0px;height:18px;line-height:18px;font-size:13px;color:#e6e6e6;font-weight:normal;">立方</div>
<svg style="position:absolute;left:872px;top:560px;" width="11" height="7" viewBox="0 0 11 7"><path d="M1 1 L5.5 5.5 L10 1" stroke="#e6e6e6" stroke-width="1.8" fill="none"/></svg>
<div style="left:533px;top:605px;width:85px;height:34px;background:#2a2a2a;border:1px solid #232323;border-radius:6px;box-sizing:border-box"></div>
<div class="t" style="left:533.0px;top:613.0px;width:85px;height:18px;line-height:18px;font-size:13px;color:#e6e6e6;font-weight:normal;text-align:center;">帮助(H)</div>
<div style="left:629px;top:605px;width:84px;height:34px;background:#2a2a2a;border:1px solid #232323;border-radius:6px;box-sizing:border-box"></div>
<div class="t" style="left:629.0px;top:613.0px;width:84px;height:18px;line-height:18px;font-size:13px;color:#e6e6e6;font-weight:normal;text-align:center;">重置(R)</div>
<div style="left:720px;top:605px;width:84px;height:34px;background:#2a2a2a;border:1px solid #8a8a8a;border-radius:6px;box-sizing:border-box"></div>
<div class="t" style="left:720.0px;top:613.0px;width:84px;height:18px;line-height:18px;font-size:13px;color:#e6e6e6;font-weight:normal;text-align:center;">缩放(S)</div>
<div style="left:811px;top:605px;width:85px;height:34px;background:#2a2a2a;border:1px solid #232323;border-radius:6px;box-sizing:border-box"></div>
<div class="t" style="left:811.0px;top:613.0px;width:85px;height:18px;line-height:18px;font-size:13px;color:#e6e6e6;font-weight:normal;text-align:center;">取消(C)</div>
<div style="left:1201px;top:47px;width:217px;height:798px;background:#3b3b3b"></div>
<div style="left:1201px;top:47px;width:6px;height:33px;background:#333"></div>
<div style="left:1208px;top:47px;width:32px;height:33px;background:#3b3b3b;border:1px solid #303030;border-bottom:none;box-sizing:border-box"></div>
<div style="left:1246px;top:47px;width:32px;height:33px;background:#3b3b3b;border:1px solid #303030;border-bottom:none;box-sizing:border-box"></div>
<div style="left:1284px;top:47px;width:32px;height:33px;background:#3b3b3b;border:1px solid #303030;border-bottom:none;box-sizing:border-box"></div>
<div style="left:1322px;top:47px;width:32px;height:29px;background:#1f1f1f"></div>
<div style="left:1322px;top:76px;width:32px;height:4px;background:#4a4a4a"></div>
<div style="left:1201px;top:80px;width:217px;height:1px;background:#2c2c2c"></div>
<svg style="position:absolute;left:1215px;top:55px;" width="18" height="18" viewBox="0 0 18 18"><path d="M17 1 L8 12 L10 14 Z" fill="#dcdcdc"/><path d="M7 13 Q3 13 1 17 Q6 17 9 15 Z" fill="#dcdcdc"/></svg>
<svg style="position:absolute;left:1254px;top:55px;" width="17" height="17" viewBox="0 0 17 17"><g fill="#dcdcdc"><path d="M0 0 L4 0 L0 4Z M17 0 L13 0 L17 4Z M0 17 L4 17 L0 13Z M17 17 L13 17 L17 13Z"/><path d="M5 0 L12 0 Q8.5 4 5 0Z M5 17 L12 17 Q8.5 13 5 17Z M0 5 L0 12 Q4 8.5 0 5Z M17 5 L17 12 Q13 8.5 17 5Z"/><circle cx="8.5" cy="8.5" r="2.3"/></g></svg>
<div class="t" style="left:1293.5px;top:54.5px;height:12px;line-height:12px;font-size:9px;color:#dcdcdc;font-weight:normal;">a</div>
<div class="t" style="left:1301.5px;top:55.5px;height:15px;line-height:15px;font-size:11px;color:#dcdcdc;font-weight:bold;">b</div>
<div class="t" style="left:1294.5px;top:60.5px;height:14px;line-height:14px;font-size:10px;color:#dcdcdc;font-weight:normal;font-style:italic">c</div>
<svg style="position:absolute;left:1330px;top:55px;" width="18" height="18" viewBox="0 0 18 18"><path d="M1 1 L11.5 1 L15 5 L3.5 5 Z M1 9 L11.5 9 L15 13 L3.5 13 Z" fill="#e4e4e4"/><path d="M3.5 5 L15 5 L11.5 9 L1 9 Z M3.5 13 L15 13 L11.5 17 L1 17 Z" fill="#9a9a9a"/></svg>
<svg style="position:absolute;left:1402px;top:58px;" width="11" height="11" viewBox="0 0 11 11"><rect x="0.5" y="0.5" width="10" height="10" fill="none" stroke="#dcdcdc"/><path d="M2.5 5.5 L8 2 L8 9 Z" fill="#dcdcdc"/></svg>
<div style="left:1203px;top:85px;width:214px;height:318px;background:#232323;border:1px solid #1e1e1e;box-sizing:border-box"></div>
<svg style="position:absolute;left:1213px;top:98px;" width="34" height="43" viewBox="0 0 34 43"><path d="M2 0 L23 0 L34 11 L34 41 Q34 43 32 43 L2 43 Q0 43 0 41 L0 2 Q0 0 2 0 Z" fill="#f2f2f2"/><path d="M23 0 L23 11 L34 11 Z" fill="#d8d8d8"/><g stroke="#d0d0d0" stroke-width="1.2"><path d="M5 7 L19 7 M5 11 L19 11 M5 14 L19 14 M5 18 L29 18 M5 21 L29 21 M5 25 L29 25 M5 28 L29 28 M5 32 L29 32 M5 35 L29 35"/></g></svg>
<div class="t" style="left:1256px;top:110.0px;height:18px;line-height:18px;font-size:13px;color:#dcdcdc;font-weight:normal;">v1.jpg</div>
<div style="left:1207px;top:148px;width:44px;height:39px;background:#fbfbfb"></div>
<svg style="position:absolute;left:1207px;top:148px;" width="44" height="39" viewBox="0 0 44 39"><g stroke="#e6e6e6" stroke-width="0.6" fill="none"><path d="M4 7 L18 4 L18 34 L4 37 Z M8 12 L14 11 M8 16 L14 15 M18 20 Q30 18 30 26 Q30 34 36 34"/><circle cx="27" cy="30" r="3"/></g></svg>
<div class="t" style="left:1256px;top:160.0px;height:18px;line-height:18px;font-size:13px;color:#dcdcdc;font-weight:normal;">v1.png (708 × 607)</div>
<div style="left:1207px;top:203px;width:44px;height:29px;background:#f4f4f4"></div>
<svg style="position:absolute;left:1208px;top:204px;" width="42" height="27" viewBox="0 0 42 27"><rect width="42" height="27" fill="#2a2a48"/><rect x="0" y="0" width="10" height="27" fill="#141428"/><path d="M14 2 L22 0 L26 12 L20 18 L14 10Z" fill="#c8a0b0"/><path d="M0 20 Q20 16 42 22 L42 27 L0 27Z" fill="#8a4a6a"/><rect x="30" y="4" width="8" height="14" fill="#6a6a8a"/></svg>
<div class="t" style="left:1256px;top:209.5px;height:18px;line-height:18px;font-size:13px;color:#dcdcdc;font-weight:normal;">6ca8670a-ee6b-46ca-a112-</div>
<div style="left:1207px;top:251px;width:44px;height:33px;background:#f4f4f4"></div>
<svg style="position:absolute;left:1208px;top:252px;" width="42" height="31" viewBox="0 0 42 31"><rect width="42" height="31" fill="#6a7080"/><path d="M0 0 L42 0 L42 8 L0 14Z" fill="#9aa4b4"/><path d="M0 22 L42 18 L42 31 L0 31Z" fill="#d8d0c0"/><circle cx="24" cy="7" r="3" fill="#3050a0"/><path d="M16 12 Q24 8 32 12 L32 31 L16 31Z" fill="#2a2a2e"/><circle cx="14" cy="14" r="3.5" fill="#c09080"/><path d="M8 18 Q14 15 20 18 L20 31 L8 31Z" fill="#1e1e22"/><circle cx="22" cy="21" r="3.5" fill="#d0a090"/></svg>
<div class="t" style="left:1256px;top:259.0px;height:18px;line-height:18px;font-size:13px;color:#dcdcdc;font-weight:normal;">family.jpg (1706 × 1279)</div>
<div style="left:1215px;top:305px;width:28px;height:26px;background:#fafafa;box-shadow:0 0 1px #888"></div>
<svg style="position:absolute;left:1222px;top:310px;" width="15" height="15" viewBox="0 0 15 15"><rect x="0" y="0" width="15" height="15" fill="#1e6fd0"/><path d="M0 15 L0 11 L7.5 5 L15 11 L15 15 Z" fill="#fff"/><path d="M3 15 L7.5 9 L12 15 Z" fill="#1e6fd0"/></svg>
<div class="t" style="left:1256px;top:309.5px;height:18px;line-height:18px;font-size:13px;color:#dcdcdc;font-weight:normal;">Gschool.png</div>
<svg style="position:absolute;left:1213px;top:348px;" width="34" height="43" viewBox="0 0 34 43"><path d="M2 0 L23 0 L34 11 L34 41 Q34 43 32 43 L2 43 Q0 43 0 41 L0 2 Q0 0 2 0 Z" fill="#f2f2f2"/><path d="M23 0 L23 11 L34 11 Z" fill="#d8d8d8"/><g stroke="#d0d0d0" stroke-width="1.2"><path d="M5 7 L19 7 M5 11 L19 11 M5 14 L19 14 M5 18 L29 18 M5 21 L29 21 M5 25 L29 25 M5 28 L29 28 M5 32 L29 32 M5 35 L29 35"/></g></svg>
<div class="t" style="left:1256px;top:359.5px;height:18px;line-height:18px;font-size:13px;color:#dcdcdc;font-weight:normal;">手抄报参考.png</div>
<div style="left:1208px;top:401px;width:44px;height:2px;background:#e0a060"></div>
<svg style="position:absolute;left:1221px;top:411px;" width="17" height="17" viewBox="0 0 17 17"><path d="M4 0 L11 0 L15 4 L15 10 L4 10 Z" fill="none" stroke="#dcdcdc" stroke-width="1.8"/><path d="M0 8 L6 8 L8 10 L17 10 L15 17 L1 17 Z" fill="#dcdcdc"/><path d="M1 8 L1 17" stroke="#dcdcdc" stroke-width="2"/></svg>
<div style="left:1276px;top:418px;width:14px;height:3px;background:#dcdcdc;border-radius:1.5px"></div>
<svg style="position:absolute;left:1329px;top:411px;" width="17" height="17" viewBox="0 0 17 17"><path d="M3 0 L11 0 L14 3 L14 6 M3 0 L3 6" stroke="#dcdcdc" stroke-width="1.8" fill="none"/><rect x="0" y="6" width="17" height="6" rx="1" fill="#dcdcdc"/><path d="M4 13 L4 17 M7 13 L7 17 M10 13 L10 17 M13 13 L13 17" stroke="#dcdcdc" stroke-width="1.5"/></svg>
<svg style="position:absolute;left:1384px;top:411px;" width="15" height="16" viewBox="0 0 15 16"><path d="M12 4 A6 6 0 1 0 13 10" stroke="#dcdcdc" stroke-width="2.4" fill="none"/><path d="M9 0 L15 0 L15 6 Z" fill="#dcdcdc"/></svg>
<div style="left:1201px;top:434px;width:217px;height:1px;background:#2c2c2c"></div>
<div style="left:1303px;top:436px;width:4px;height:4px;background:#9a9a9a;border-radius:50%"></div>
<div style="left:1308px;top:436px;width:4px;height:4px;background:#9a9a9a;border-radius:50%"></div>
<div style="left:1313px;top:436px;width:4px;height:4px;background:#9a9a9a;border-radius:50%"></div>
<div style="left:1201px;top:441px;width:6px;height:33px;background:#333"></div>
<div style="left:1208px;top:441px;width:33px;height:29px;background:#1f1f1f"></div>
<div style="left:1208px;top:470px;width:33px;height:4px;background:#4a4a4a"></div>
<div style="left:1246px;top:441px;width:33px;height:33px;background:#3b3b3b;border:1px solid #303030;border-bottom:none;box-sizing:border-box"></div>
<div style="left:1284px;top:441px;width:33px;height:33px;background:#3b3b3b;border:1px solid #303030;border-bottom:none;box-sizing:border-box"></div>
<div style="left:1201px;top:474px;width:217px;height:1px;background:#2c2c2c"></div>
<svg style="position:absolute;left:1215px;top:449px;" width="18" height="17" viewBox="0 0 18 17"><path d="M4 0 L17 0 L14 4 L1 4 Z M4 6.5 L17 6.5 L14 10.5 L1 10.5 Z M4 13 L17 13 L14 17 L1 17 Z" fill="#dcdcdc"/></svg>
<svg style="position:absolute;left:1254px;top:449px;" width="17" height="17" viewBox="0 0 17 17"><rect x="1" y="1" width="15" height="15" fill="none" stroke="#dcdcdc" stroke-width="1.5"/><rect x="4" y="4" width="2" height="9" fill="#8a8a8a"/><rect x="7.5" y="4" width="2" height="9" fill="#dcdcdc"/><rect x="11" y="4" width="2" height="9" fill="#dcdcdc"/></svg>
<svg style="position:absolute;left:1292px;top:450px;" width="17" height="14" viewBox="0 0 17 14"><path d="M2 12 Q8 0 15 12" stroke="#dcdcdc" stroke-width="2" fill="none"/><rect x="0" y="2" width="17" height="3" fill="#dcdcdc"/><rect x="3" y="0" width="3" height="6" fill="#dcdcdc"/><rect x="11" y="0" width="3" height="6" fill="#dcdcdc"/></svg>
<svg style="position:absolute;left:1402px;top:452px;" width="11" height="11" viewBox="0 0 11 11"><rect x="0.5" y="0.5" width="10" height="10" fill="none" stroke="#dcdcdc"/><path d="M2.5 5.5 L8 2 L8 9 Z" fill="#dcdcdc"/></svg>
<div style="left:1204px;top:477px;width:173px;height:25px;background:#2a2a2a;border:1px solid #242424;border-radius:6px;box-sizing:border-box"></div>
<div class="t" style="left:1208px;top:481.0px;height:18px;line-height:18px;font-size:13px;color:#dcdcdc;font-weight:normal;">模式</div>
<div class="t" style="left:1328px;top:481.0px;height:18px;line-height:18px;font-size:13px;color:#dcdcdc;font-weight:normal;">正常</div>
<svg style="position:absolute;left:1361px;top:486px;" width="12" height="8" viewBox="0 0 12 8"><path d="M1 1 L6 6 L11 1" stroke="#dcdcdc" stroke-width="1.8" fill="none"/></svg>
<div style="left:1380px;top:477px;width:37px;height:25px;background:#2a2a2a;border:1px solid #242424;border-radius:6px;box-sizing:border-box"></div>
<svg style="position:absolute;left:1382px;top:482px;" width="16" height="16" viewBox="0 0 16 16"><path d="M3.5 6 A5.5 5.5 0 1 1 6 12" stroke="#dcdcdc" stroke-width="1.8" fill="none"/><path d="M1 6 L6 2 L6 8 Z" fill="#dcdcdc"/><circle cx="4" cy="13.5" r="2" fill="#dcdcdc"/></svg>
<svg style="position:absolute;left:1401px;top:486px;" width="10" height="7" viewBox="0 0 10 7"><path d="M1 1 L5 5 L9 1" stroke="#dcdcdc" stroke-width="1.8" fill="none"/></svg>
<div style="left:1204px;top:506px;width:213px;height:24px;background:#2a2a2a;border:1px solid #242424;border-radius:6px;box-sizing:border-box"></div>
<div style="left:1205px;top:507px;width:170px;height:22px;background:#656565;border-radius:5px 0 0 5px"></div>
<div class="t" style="left:1209px;top:509.0px;height:18px;line-height:18px;font-size:13px;color:#e0e0e0;font-weight:normal;">不透明度</div>
<div class="t" style="right:47px;top:509.0px;height:18px;line-height:18px;font-size:13px;color:#e6e6e6;font-weight:normal;text-align:right;">100.0</div>
<div style="left:1375px;top:507px;width:20px;height:22px;background:#383838"></div>
<div style="left:1396px;top:507px;width:20px;height:22px;background:#383838;border-radius:0 5px 5px 0"></div>
<div style="left:1378px;top:517px;width:14px;height:3px;background:#dcdcdc"></div>
<div style="left:1399px;top:517px;width:14px;height:3px;background:#6a6a6a"></div>
<div style="left:1404.5px;top:511px;width:3px;height:14px;background:#6a6a6a"></div>
<div style="left:1203px;top:535px;width:214px;height:286px;background:#232323;border:1px solid #1e1e1e;box-sizing:border-box"></div>
<div style="left:1204px;top:536px;width:212px;height:37px;background:#3b3b3b"></div>
<div style="left:1234px;top:536px;width:1px;height:37px;background:#2c2c2c"></div>
<div style="left:1264px;top:536px;width:1px;height:37px;background:#2c2c2c"></div>
<div style="left:1294px;top:536px;width:1px;height:37px;background:#2c2c2c"></div>
<div style="left:1204px;top:573px;width:212px;height:1px;background:#2c2c2c"></div>
<svg style="position:absolute;left:1211px;top:550px;" width="17" height="11" viewBox="0 0 17 11"><path d="M0.5 5.5 Q8.5 -2 16.5 5.5 Q8.5 13 0.5 5.5 Z" fill="none" stroke="#dcdcdc" stroke-width="1.6"/><circle cx="8.5" cy="5.5" r="2.8" fill="#dcdcdc"/></svg>
<svg style="position:absolute;left:1243px;top:548px;" width="13" height="13" viewBox="0 0 13 13"><path d="M3 6 L3 4 A3.5 3.5 0 0 1 10 4 L10 6" stroke="#dcdcdc" stroke-width="2" fill="none"/><rect x="1" y="6" width="11" height="7" fill="#dcdcdc"/></svg>
<div class="t" style="left:1272px;top:545.5px;height:19px;line-height:19px;font-size:14px;color:#dcdcdc;font-weight:bold;"><i>ƒ</i><span style="font-size:11px">x</span></div>
<svg style="position:absolute;left:1405px;top:547px;" width="12" height="15" viewBox="0 0 12 15"><path d="M11 3 A6 6 0 1 0 11 12" stroke="#dcdcdc" stroke-width="2" fill="none"/></svg>
<div style="left:1204px;top:574px;width:212px;height:24px;background:#333333"></div>
<svg style="position:absolute;left:1211px;top:581px;" width="17" height="11" viewBox="0 0 17 11"><path d="M0.5 5.5 Q8.5 -2 16.5 5.5 Q8.5 13 0.5 5.5 Z" fill="none" stroke="#dcdcdc" stroke-width="1.6"/><circle cx="8.5" cy="5.5" r="2.8" fill="#dcdcdc"/></svg>
<div style="left:1314px;top:575px;width:36px;height:22px;background:#f8f8f8"></div>
<svg style="position:absolute;left:1316px;top:577px;" width="32" height="18" viewBox="0 0 32 18"><use href="#illus" transform="scale(0.0333333,0.0333333)"/></svg>
<div class="t" style="left:1352px;top:577.0px;height:18px;line-height:18px;font-size:13px;color:#e8e8e8;font-weight:bold;width:64px;overflow:hidden;white-space:nowrap">Gschool.pr</div>
<svg style="position:absolute;left:1207px;top:826px;" width="16" height="17" viewBox="0 0 16 17"><path d="M4 4 L11 4 L15 8 L15 17" stroke="#dcdcdc" stroke-width="1.6" fill="none"/><path d="M4 9 L4 17" stroke="#dcdcdc" stroke-width="1.6"/><path d="M0 4 L7 4 M3.5 0.5 L3.5 7.5" stroke="#dcdcdc" stroke-width="2"/></svg>
<svg style="position:absolute;left:1234px;top:826px;" width="17" height="17" viewBox="0 0 17 17"><path d="M0 2 L6 2 L8 4 L17 4 L17 17 L0 17 Z" fill="#dcdcdc"/><path d="M8.5 7 L8.5 16 M4 11.5 L13 11.5" stroke="#3b3b3b" stroke-width="2.5"/></svg>
<svg style="position:absolute;left:1262px;top:829px;" width="15" height="9" viewBox="0 0 15 9"><path d="M1 8 L7.5 1.5 L14 8" stroke="#6a6a6a" stroke-width="1.8" fill="none"/></svg>
<svg style="position:absolute;left:1289px;top:829px;" width="15" height="9" viewBox="0 0 15 9"><path d="M1 1 L7.5 7.5 L14 1" stroke="#6a6a6a" stroke-width="1.8" fill="none"/></svg>
<svg style="position:absolute;left:1316px;top:828px;" width="15" height="15" viewBox="0 0 15 15"><rect x="1" y="1" width="9" height="7" fill="none" stroke="#dcdcdc" stroke-width="1.5"/><path d="M7 8 L7 11 L14 11 L14 4 L10 4" stroke="#dcdcdc" stroke-width="1.5" fill="none"/></svg>
<svg style="position:absolute;left:1342px;top:828px;" width="16" height="15" viewBox="0 0 16 15"><path d="M3 1 L10 1 L8 3.5 L1 3.5 Z M3 6 L10 6 L8 8.5 L1 8.5 Z M3 11 L10 11 L8 13.5 L1 13.5 Z" fill="#dcdcdc"/><path d="M13 1 L13 13 M10.5 10.5 L13 13.5 L15.5 10.5" stroke="#dcdcdc" stroke-width="1.6" fill="none"/></svg>
<svg style="position:absolute;left:1369px;top:826px;" width="16" height="17" viewBox="0 0 16 17"><path d="M5 0 L13 0 L13 6 Q9 10 5 6 Z" fill="#dcdcdc"/><path d="M0 12 L12 12 L16 12 L13 17 L0 17 Z" fill="#dcdcdc"/><path d="M7 3 L8 3 M10 3 L11 3" stroke="#3b3b3b" stroke-width="1"/></svg>
<svg style="position:absolute;left:1396px;top:826px;" width="16" height="17" viewBox="0 0 16 17"><rect x="0" y="0" width="16" height="17" rx="1" fill="#dcdcdc"/><path d="M3 3 L13 14 M13 3 L3 14" stroke="#3b3b3b" stroke-width="2.5"/></svg>
<div style="left:1201px;top:843px;width:217px;height:2px;background:#262626"></div>
<div style="left:0px;top:843px;width:1418px;height:2px;background:#222"></div>
</body></html>
